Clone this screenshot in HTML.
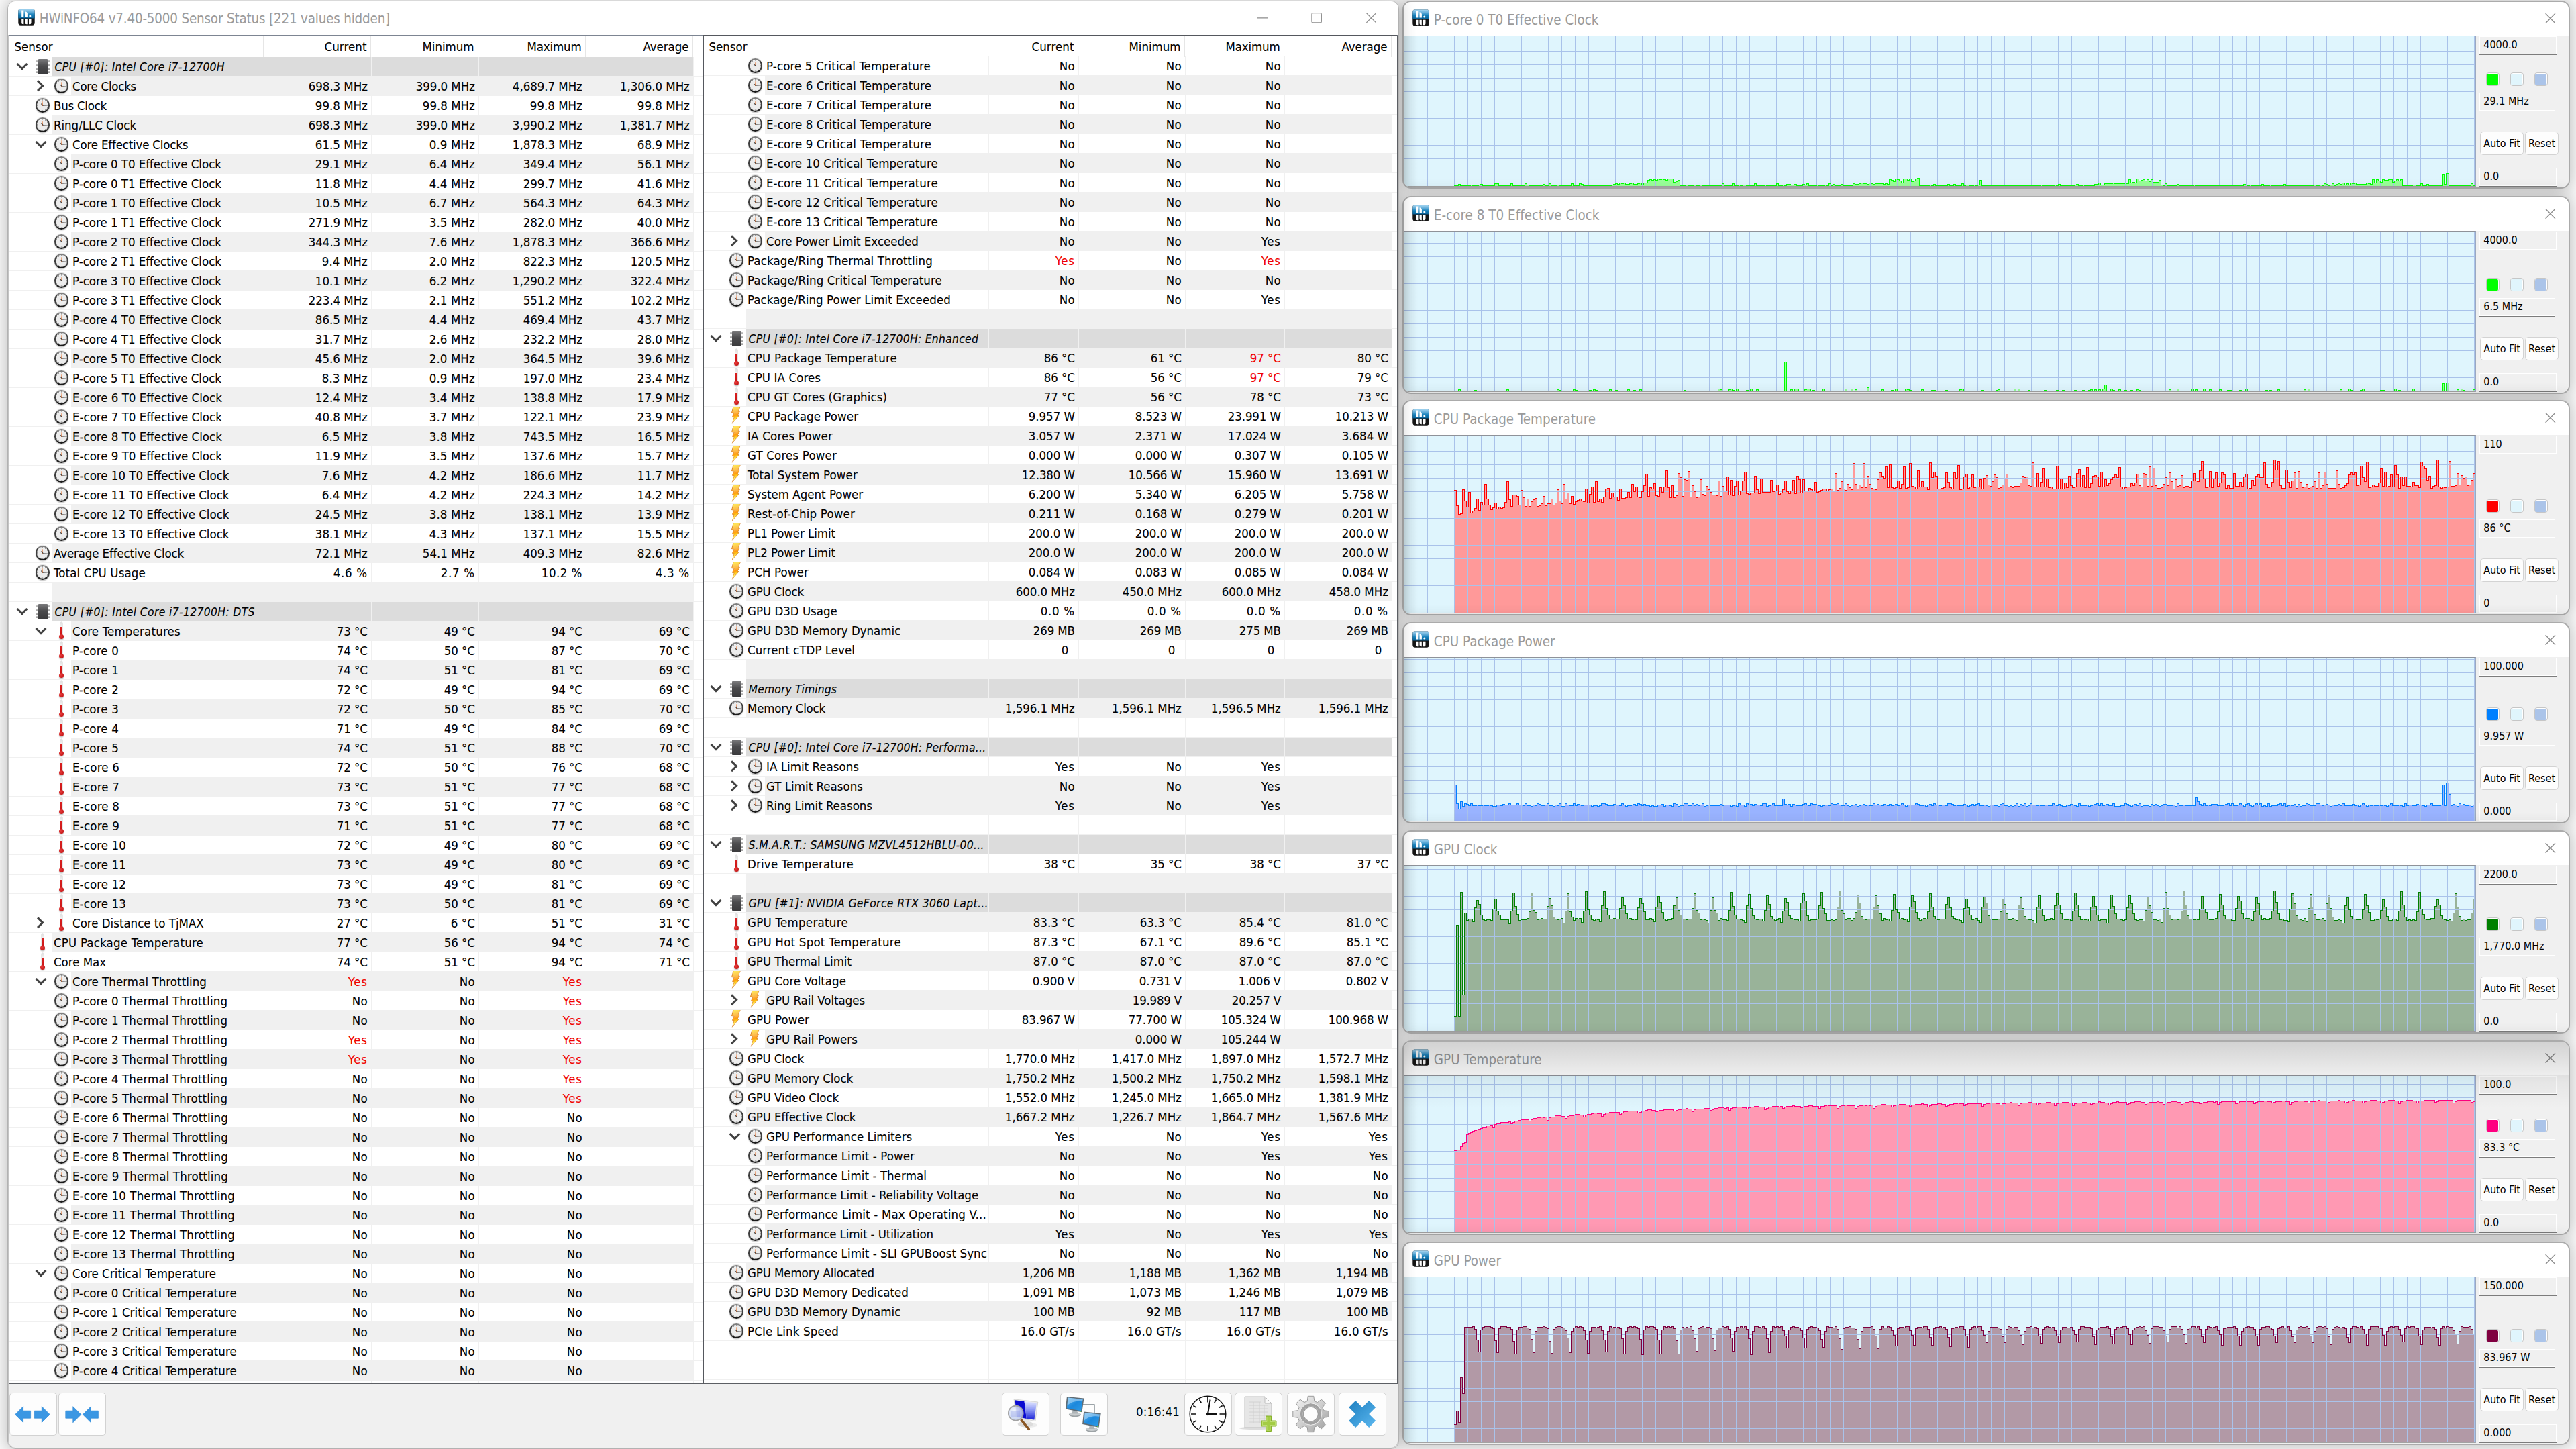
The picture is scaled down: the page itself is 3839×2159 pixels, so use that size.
<!DOCTYPE html><html><head><meta charset="utf-8"><title>HWiNFO64 Sensor Status</title><style>
*{box-sizing:border-box}
html,body{margin:0;padding:0}
body{width:3839px;height:2159px;overflow:hidden;background:#fafafa;position:relative;font-family:"Liberation Sans",sans-serif;color:#000}
.win{position:absolute;background:#fff;border:1px solid #a6a6a6;border-radius:12px;overflow:hidden;box-shadow:0 0 24px 2px rgba(0,0,0,.24)}
#mw{left:11px;top:1px;width:2074px;height:2158px;background:#f0f0f0;z-index:5;border-color:#b2b2b2;outline:1px solid #c4c4c4;outline-offset:-2px}
.tb{position:absolute;left:0;top:0;right:0;height:50px;background:#fff}
.tt{position:absolute;top:11px;line-height:30px;font-family:"DejaVu Sans Condensed","Liberation Sans",sans-serif;font-size:20.4px;letter-spacing:-.18px;color:#9a9a9a;white-space:pre}
.lg{position:absolute;width:25px;height:25px}
.cap{position:absolute;stroke:#8c8c8c;stroke-width:1.3;fill:none}
#pn{position:absolute;left:1px;top:50px;width:2070px;height:2010px;background:#fff;border:1px solid #7d8592;border-right-color:#5c5f64;border-bottom-color:#5c5f64}
.ls{position:absolute;top:0;height:2008px;overflow:hidden;font-family:"DejaVu Sans Condensed","Liberation Sans",sans-serif;font-size:18.5px;white-space:pre;-webkit-text-stroke:.12px}
#l1{left:0;width:1033px}
#l2{left:1035px;width:1033px;border-top:1px solid #55585e;margin-top:-1px;height:2009px}
#l2 .rows,#l2 .vg{top:31px}
#sp{position:absolute;left:1033px;top:-1px;width:2px;height:2010px;background:linear-gradient(to right,#a4a8ae 50%,#55585e 50%)}
.hd{position:absolute;left:0;top:0;height:32px;width:100%;line-height:33px}
.hd span{position:absolute;top:0}
.hd i{position:absolute;top:1px;width:1px;height:31px;background:#e6e6e6}
.vg{position:absolute;top:32px;bottom:0;width:1px;background:#f0f0f0}
.rows{position:absolute;left:0;top:32px;width:100%}
.r{height:29px;border-bottom:1px solid #f0f0f0;display:flex;position:relative;line-height:29px}
.r>div{height:28px;margin-right:1px;flex:none;overflow:hidden}
.c0{display:flex}
.c0 u{display:block;flex:none;position:relative;height:28px;text-decoration:none}
.c0 b{display:block;flex:1;font-weight:normal;padding-left:2px;overflow:hidden;height:28px}
.v{text-align:right;padding-right:5.2px}
.g .v,.g .c0 b{background:#f0f0f0}
.h .v,.h .c0 b{background:#dcdcdc}
.h .c0 b{font-style:italic;font-size:17.4px;padding-left:3.6px;line-height:30.6px}
.red{color:#f00000}
/* icons */
.clk{position:absolute;top:3.4px;width:21.4px;height:21.4px;border-radius:50%;border:2.2px solid;border-color:#7f7f7f #3d3d3d #1a1a1a #3d3d3d;background:linear-gradient(90deg,#777,#b5b5b5) no-repeat 9.4px 8.6px/7.2px 1.3px,radial-gradient(circle at 50% 50%,#ececec 0,#ececec 58%,rgba(236,236,236,0) 62%),repeating-conic-gradient(from -5deg,#9a9a9a 0deg,#9a9a9a 10deg,rgba(230,230,230,0) 10deg,rgba(230,230,230,0) 30deg),linear-gradient(#f6f6f6,#dadada);box-shadow:0 1.6px 1.4px rgba(0,0,0,.22),0 -1.2px 1px rgba(0,0,0,.10)}
.clk:before{content:"";position:absolute;left:8px;top:2.2px;width:1.3px;height:7.2px;background:linear-gradient(#f0c3a8,#d9773f)}
.clk:after{content:"";position:absolute;left:4.6px;top:8.2px;width:4.4px;height:1.4px;background:#3a3a3a;transform:rotate(40deg);transform-origin:100% 50%}
.thm{position:absolute;top:1px;width:8px;height:26px}
.thm:before{content:"";position:absolute;left:2.5px;top:.4px;width:3px;height:21px;border-radius:1.5px 1.5px 0 0;background:linear-gradient(#dcdcdc 0,#f2f2f2 33%,#d92020 35%,#c81414 100%);box-shadow:0 0 0 .5px #d0d0d0}
.thm:after{content:"";position:absolute;left:.5px;top:17.5px;width:7px;height:7px;border-radius:50%;background:radial-gradient(circle at 35% 35%,#e83a3a,#b80e0e);box-shadow:0 1.5px 1.5px rgba(0,0,0,.25)}
.blt{position:absolute;top:-1px;width:14px;height:27px;background:#d9822b;clip-path:polygon(19% 1%,100% 1%,75% 29%,92% 30%,69% 52%,85% 53%,5% 100%,26% 63%,6% 61%,26% 39%,0 37%)}
.blt:before{content:"";position:absolute;left:0;top:0;width:14px;height:27px;background:linear-gradient(165deg,#ffe85a 8%,#fdb54a 38%,#ff9a0e 50%,#ffc81a 60%,#fff08a 76%,#f7a11e 100%);clip-path:polygon(24% 4%,93% 4%,70% 31%,84% 32%,64% 54%,76% 55%,14% 92%,32% 61%,13% 59%,32% 37%,8% 35%)}
.chp{position:absolute;top:2.7px;width:14px;height:23.3px;background:linear-gradient(#7b7b7d,#4b4b4d 45%,#3a3a3c);border-radius:1px}
.chp:before,.chp:after{content:"";position:absolute;top:2.2px;width:3.2px;height:19px;background:repeating-linear-gradient(#c9c9c9 0,#9c9c9c 3.1px,transparent 3.1px,transparent 5.3px)}
.chp:before{left:-3.2px}.chp:after{right:-3.2px}
.ev,.er{position:absolute;border:solid #424242}
.ev{width:12px;height:12px;border-width:0 3.4px 3.4px 0;top:4.7px;transform:rotate(45deg)}
.er{width:11.5px;height:11.5px;border-width:0 3.3px 3.3px 0;top:8.25px;transform:rotate(-45deg)}
/* toolbar */
.bt{position:absolute;top:2074px;width:71px;height:64px;background:#fdfdfd;border:1px solid #d2d2d2;border-radius:5px}
.bt svg{position:absolute;left:0;top:0}
#tm{position:absolute;left:1681px;top:2086.7px;font-family:"DejaVu Sans Condensed","Liberation Sans",sans-serif;font-size:18.5px;letter-spacing:.1px;line-height:30px}
/* graph windows */
.gw{left:2090px;width:1740px;border:2px solid #ababab;background:#f0f0f0;border-radius:13px}
.ga{position:absolute;left:0;top:50px;width:1598px;background-color:#dff5fd;border-top:1px solid #8f9299;border-right:1px solid #9aa8c0;border-bottom:1px solid #a3a3a3;overflow:hidden}
.ga svg{position:absolute;left:0;top:0}
.sh{position:absolute;left:0;top:0;width:22px;height:100%;background:linear-gradient(to right,rgba(0,0,0,.10),rgba(0,0,0,.04) 45%,rgba(0,0,0,0))}
.sd{position:absolute;left:1598px;top:50px;right:0;background:#f0f0f0;font-family:"DejaVu Sans Condensed","Liberation Sans",sans-serif;font-size:16px;white-space:pre}
.fd{position:absolute;left:5px;height:27px;background:#f0f0f0;border:1px solid #fff;box-shadow:0 1px 0 #7c7c7c;line-height:24px;padding-left:5.3px}
.sw{position:absolute;width:20px;height:20px;border:1px solid #c6c6c6;border-radius:4px;background:#fff}
.gb{position:absolute;height:35px;background:#fdfdfd;border:1px solid #d3d3d3;border-radius:5px;line-height:33px;text-align:center}
</style></head><body><div class="win gw" style="top:1px;height:280px"><div class="tb"><svg class="lg" style="left:13.4px;top:11.3px" viewBox="0 0 25 25"><defs><linearGradient id="lg1" x1="0" y1="0" x2="0" y2="1"><stop offset="0" stop-color="#a9d8f2"/><stop offset=".3" stop-color="#6db3dc"/><stop offset=".62" stop-color="#1580bb"/><stop offset="1" stop-color="#0a5f93"/></linearGradient></defs><rect x=".3" y=".3" width="24.4" height="24.4" rx="3.6" fill="#151515"/><path d="M.3 14.6V3.9A3.6 3.6 0 0 1 3.9 .3H21.1A3.6 3.6 0 0 1 24.7 3.9V14.6Z" fill="url(#lg1)"/><path d="M5.2 2.5h3.1v10H5.2zM10.5 4.3l2.2.6 1.2 2.2v5.4h-3.4zM5.2 15.7h3.2v7.6H7.4a2.2 2.2 0 0 1-2.2-2.2zM10.5 15.7h3.3v7.6h-1.1a2.2 2.2 0 0 1-2.2-2.2zM16 15.7h3.5v5a2.6 2.6 0 0 1-2.6 2.6H16z" fill="#fff"/><circle cx="17.8" cy="11" r="1.55" fill="#fff"/></svg><span class="tt" style="left:44.8px;top:11.6px;letter-spacing:.03px">P-core 0 T0 Effective Clock</span><svg class="cap" style="left:1693.5px;top:10px" width="30" height="30"><path d="M7.6 7.3l14.4 14.4M22 7.3L7.6 21.7"/></svg></div><div class="ga" style="height:225px"><svg width="1597" height="223" shape-rendering="crispEdges"><path d="M75 222h6v-2h3v2h15v-1h3v1h9v-1h3v-1h3v2h18v-3h6v3h18v-3h3v3h18v-3h3v2h3v1h21v-2h3v2h6v-3h3v3h9v-1h3v1h18v-3h3v3h9v-3h3v1h3v2h42v-1h3v-1h3v-1h3v1h3v-2h3v1h3v-1h3v2h6v-1h3v-1h3v2h6v-1h3v-1h3v3h3v-3h6v-4h3v-1h3v1h3v-1h3v1h3v-2h3v1h3v-1h3v1h3v1h3v-2h9v5h3v-1h3v-2h3v8h9v-1h3v1h9v-1h3v1h6v-1h3v1h30v-3h3v3h12v-3h3v3h6v-1h3v1h3v-1h6v1h12v-3h3v3h12v-1h3v1h15v-3h3v3h6v-1h3v1h3v-2h6v1h6v-1h3v2h9v-2h3v1h3v-2h3v3h12v-1h3v1h9v-1h3v1h3v-3h3v3h3v-2h3v2h9v-2h3v2h15v-3h3v1h6v-1h3v-1h3v1h6v1h3v-2h3v1h3v1h3v-1h12v1h3v-1h3v1h3v-7h3v1h3v2h3v-4h3v1h3v2h3v3h3v-6h6v2h3v-2h3v4h3v-1h3v-3h3v-1h3v11h15v-1h3v1h3v-2h3v2h18v-2h3v2h6v-2h3v2h9v-3h3v3h3v-1h6v1h6v-1h3v1h3v-1h3v-7h3v8h87v-1h3v1h18v-1h3v1h3v-2h3v2h21v-1h3v-1h3v2h6v-1h3v1h15v-2h6v-2h3v3h6v-2h12v-1h3v1h15v-1h3v1h3v-6h3v5h3v-1h3v1h3v-6h3v3h3v-1h3v-1h3v2h3v-2h3v3h3v-3h3v4h9v-3h3v7h3v1h3v-3h3v3h15v-2h3v2h21v-1h3v1h72v-2h3v1h3v1h3v-1h3v1h15v-2h3v2h9v-1h3v1h18v-2h3v2h42v-1h3v1h6v-1h3v1h3v-3h3v1h3v2h3v-1h3v-2h3v3h3v-2h3v-1h3v1h3v-2h3v3h3v-2h3v2h3v-3h3v1h3v-1h3v2h15v-2h3v1h3v1h3v-7h3v5h3v-5h3v2h3v2h3v-4h3v1h6v-1h6v4h3v-2h3v-2h3v2h3v-2h3v9h15v-1h6v1h6v-3h3v3h6v-2h3v2h21v-16h3v14h3v-16h3v18h33v-3h3v3h3v-2h3V225H75Z" fill="#99ff99"/><path d="M15.5 0V223M35.5 0V223M55.5 0V223M75.5 0V223M95.5 0V223M115.5 0V223M135.5 0V223M155.5 0V223M175.5 0V223M195.5 0V223M215.5 0V223M235.5 0V223M255.5 0V223M275.5 0V223M295.5 0V223M315.5 0V223M335.5 0V223M355.5 0V223M375.5 0V223M395.5 0V223M415.5 0V223M435.5 0V223M455.5 0V223M475.5 0V223M495.5 0V223M515.5 0V223M535.5 0V223M555.5 0V223M575.5 0V223M595.5 0V223M615.5 0V223M635.5 0V223M655.5 0V223M675.5 0V223M695.5 0V223M715.5 0V223M735.5 0V223M755.5 0V223M775.5 0V223M795.5 0V223M815.5 0V223M835.5 0V223M855.5 0V223M875.5 0V223M895.5 0V223M915.5 0V223M935.5 0V223M955.5 0V223M975.5 0V223M995.5 0V223M1015.5 0V223M1035.5 0V223M1055.5 0V223M1075.5 0V223M1095.5 0V223M1115.5 0V223M1135.5 0V223M1155.5 0V223M1175.5 0V223M1195.5 0V223M1215.5 0V223M1235.5 0V223M1255.5 0V223M1275.5 0V223M1295.5 0V223M1315.5 0V223M1335.5 0V223M1355.5 0V223M1375.5 0V223M1395.5 0V223M1415.5 0V223M1435.5 0V223M1455.5 0V223M1475.5 0V223M1495.5 0V223M1515.5 0V223M1535.5 0V223M1555.5 0V223M1575.5 0V223M1595.5 0V223M0 202.5H1597M0 182.5H1597M0 162.5H1597M0 142.5H1597M0 122.5H1597M0 102.5H1597M0 82.5H1597M0 62.5H1597M0 42.5H1597M0 22.5H1597M0 2.5H1597" stroke="#a9c2ea" stroke-width="1" fill="none"/><path d="M75 222h6v-2h3v2h15v-1h3v1h9v-1h3v-1h3v2h18v-3h6v3h18v-3h3v3h18v-3h3v2h3v1h21v-2h3v2h6v-3h3v3h9v-1h3v1h18v-3h3v3h9v-3h3v1h3v2h42v-1h3v-1h3v-1h3v1h3v-2h3v1h3v-1h3v2h6v-1h3v-1h3v2h6v-1h3v-1h3v3h3v-3h6v-4h3v-1h3v1h3v-1h3v1h3v-2h3v1h3v-1h3v1h3v1h3v-2h9v5h3v-1h3v-2h3v8h9v-1h3v1h9v-1h3v1h6v-1h3v1h30v-3h3v3h12v-3h3v3h6v-1h3v1h3v-1h6v1h12v-3h3v3h12v-1h3v1h15v-3h3v3h6v-1h3v1h3v-2h6v1h6v-1h3v2h9v-2h3v1h3v-2h3v3h12v-1h3v1h9v-1h3v1h3v-3h3v3h3v-2h3v2h9v-2h3v2h15v-3h3v1h6v-1h3v-1h3v1h6v1h3v-2h3v1h3v1h3v-1h12v1h3v-1h3v1h3v-7h3v1h3v2h3v-4h3v1h3v2h3v3h3v-6h6v2h3v-2h3v4h3v-1h3v-3h3v-1h3v11h15v-1h3v1h3v-2h3v2h18v-2h3v2h6v-2h3v2h9v-3h3v3h3v-1h6v1h6v-1h3v1h3v-1h3v-7h3v8h87v-1h3v1h18v-1h3v1h3v-2h3v2h21v-1h3v-1h3v2h6v-1h3v1h15v-2h6v-2h3v3h6v-2h12v-1h3v1h15v-1h3v1h3v-6h3v5h3v-1h3v1h3v-6h3v3h3v-1h3v-1h3v2h3v-2h3v3h3v-3h3v4h9v-3h3v7h3v1h3v-3h3v3h15v-2h3v2h21v-1h3v1h72v-2h3v1h3v1h3v-1h3v1h15v-2h3v2h9v-1h3v1h18v-2h3v2h42v-1h3v1h6v-1h3v1h3v-3h3v1h3v2h3v-1h3v-2h3v3h3v-2h3v-1h3v1h3v-2h3v3h3v-2h3v2h3v-3h3v1h3v-1h3v2h15v-2h3v1h3v1h3v-7h3v5h3v-5h3v2h3v2h3v-4h3v1h6v-1h6v4h3v-2h3v-2h3v2h3v-2h3v9h15v-1h6v1h6v-3h3v3h6v-2h3v2h21v-16h3v14h3v-16h3v18h33v-3h3v3h3v-2h3" stroke="#00ff00" stroke-width="1" fill="none"/></svg><div class="sh"></div></div><div class="sd" style="height:226px"><div class="fd" style="top:1px;width:115px">4000.0</div><div class="sw" style="left:14.6px;top:55.30000000000001px"><i style="position:absolute;left:.5px;top:.5px;right:.5px;bottom:.5px;border-radius:2px;background:#00ff00"></i></div><div class="sw" style="left:50.6px;top:55.30000000000001px"><i style="position:absolute;left:.5px;top:.5px;right:.5px;bottom:.5px;border-radius:2px;background:#e0f5fc"></i></div><div class="sw" style="left:86.6px;top:55.30000000000001px"><i style="position:absolute;left:.5px;top:.5px;right:.5px;bottom:.5px;border-radius:2px;background:#abc4e9"></i></div><div class="fd" style="top:85px;width:113px">29.1 MHz</div><div class="gb" style="left:6px;top:143px;width:65px">Auto Fit</div><div class="gb" style="left:73px;top:143px;width:50px">Reset</div><div class="fd" style="top:197px;width:115px">0.0</div></div></div><div class="win gw" style="top:292px;height:295px"><div class="tb"><svg class="lg" style="left:13.4px;top:11.3px" viewBox="0 0 25 25"><defs><linearGradient id="lg2" x1="0" y1="0" x2="0" y2="1"><stop offset="0" stop-color="#a9d8f2"/><stop offset=".3" stop-color="#6db3dc"/><stop offset=".62" stop-color="#1580bb"/><stop offset="1" stop-color="#0a5f93"/></linearGradient></defs><rect x=".3" y=".3" width="24.4" height="24.4" rx="3.6" fill="#151515"/><path d="M.3 14.6V3.9A3.6 3.6 0 0 1 3.9 .3H21.1A3.6 3.6 0 0 1 24.7 3.9V14.6Z" fill="url(#lg2)"/><path d="M5.2 2.5h3.1v10H5.2zM10.5 4.3l2.2.6 1.2 2.2v5.4h-3.4zM5.2 15.7h3.2v7.6H7.4a2.2 2.2 0 0 1-2.2-2.2zM10.5 15.7h3.3v7.6h-1.1a2.2 2.2 0 0 1-2.2-2.2zM16 15.7h3.5v5a2.6 2.6 0 0 1-2.6 2.6H16z" fill="#fff"/><circle cx="17.8" cy="11" r="1.55" fill="#fff"/></svg><span class="tt" style="left:44.8px;top:11.6px;letter-spacing:.03px">E-core 8 T0 Effective Clock</span><svg class="cap" style="left:1693.5px;top:10px" width="30" height="30"><path d="M7.6 7.3l14.4 14.4M22 7.3L7.6 21.7"/></svg></div><div class="ga" style="height:240px"><svg width="1597" height="238" shape-rendering="crispEdges"><path d="M75 237h6v-2h3v2h21v-1h3v1h45v-2h3v2h72v-2h3v1h3v1h18v-2h3v1h3v1h18v-1h3v1h3v-2h3v1h3v1h18v-2h3v2h6v-1h3v1h15v-2h3v2h6v-1h3v1h6v-2h3v2h63v-1h3v1h48v-3h3v1h3v2h9v-2h3v-1h3v2h3v1h3v-3h3v3h12v-1h3v1h3v-3h3v3h6v-2h3v2h39v-43h3v43h6v-2h3v2h3v-3h6v3h9v-2h3v-1h6v3h3v-1h3v1h12v-3h3v3h30v-3h3v3h6v-3h3v3h3v-2h3v2h15v-5h3v5h18v-2h3v2h12v-1h3v1h3v-3h3v3h12v-3h3v1h3v1h3v1h15v-2h3v2h12v-1h6v1h15v-1h3v1h18v-2h3v-1h3v3h27v-1h3v1h18v-1h3v-1h3v2h21v-3h3v3h3v-3h3v3h12v-1h3v1h21v-1h3v1h15v-1h3v1h6v-1h3v1h15v-1h3v1h9v-1h3v1h6v-1h3v-1h3v2h3v-2h3v2h3v-2h3v2h3v-3h3v-6h3v9h6v-3h3v2h3v1h6v-2h3v2h6v-1h3v1h6v-1h3v1h6v-2h3v1h3v1h42v-2h3v2h9v-3h3v3h18v-3h3v3h3v-2h3v2h9v-3h3v3h6v-2h3v2h12v-2h3v2h9v-1h6v1h12v-1h3v1h6v-3h3v3h27v-1h3v1h3v-1h3v1h9v-2h3v2h36v-2h3v2h3v-3h3v3h45v-2h3v2h9v-3h3v2h3v1h12v-1h3v-2h3v3h24v-1h6v1h15v-3h3v3h3v-1h3v1h18v-3h3v3h42v-11h3v11h3v-12h3v12h12v-2h3v2h3v-3h3v2h3v1h12v-2h3v2h3V240H75Z" fill="#99ff99"/><path d="M15.5 0V238M35.5 0V238M55.5 0V238M75.5 0V238M95.5 0V238M115.5 0V238M135.5 0V238M155.5 0V238M175.5 0V238M195.5 0V238M215.5 0V238M235.5 0V238M255.5 0V238M275.5 0V238M295.5 0V238M315.5 0V238M335.5 0V238M355.5 0V238M375.5 0V238M395.5 0V238M415.5 0V238M435.5 0V238M455.5 0V238M475.5 0V238M495.5 0V238M515.5 0V238M535.5 0V238M555.5 0V238M575.5 0V238M595.5 0V238M615.5 0V238M635.5 0V238M655.5 0V238M675.5 0V238M695.5 0V238M715.5 0V238M735.5 0V238M755.5 0V238M775.5 0V238M795.5 0V238M815.5 0V238M835.5 0V238M855.5 0V238M875.5 0V238M895.5 0V238M915.5 0V238M935.5 0V238M955.5 0V238M975.5 0V238M995.5 0V238M1015.5 0V238M1035.5 0V238M1055.5 0V238M1075.5 0V238M1095.5 0V238M1115.5 0V238M1135.5 0V238M1155.5 0V238M1175.5 0V238M1195.5 0V238M1215.5 0V238M1235.5 0V238M1255.5 0V238M1275.5 0V238M1295.5 0V238M1315.5 0V238M1335.5 0V238M1355.5 0V238M1375.5 0V238M1395.5 0V238M1415.5 0V238M1435.5 0V238M1455.5 0V238M1475.5 0V238M1495.5 0V238M1515.5 0V238M1535.5 0V238M1555.5 0V238M1575.5 0V238M1595.5 0V238M0 217.5H1597M0 197.5H1597M0 177.5H1597M0 157.5H1597M0 137.5H1597M0 117.5H1597M0 97.5H1597M0 77.5H1597M0 57.5H1597M0 37.5H1597M0 17.5H1597" stroke="#a9c2ea" stroke-width="1" fill="none"/><path d="M75 237h6v-2h3v2h21v-1h3v1h45v-2h3v2h72v-2h3v1h3v1h18v-2h3v1h3v1h18v-1h3v1h3v-2h3v1h3v1h18v-2h3v2h6v-1h3v1h15v-2h3v2h6v-1h3v1h6v-2h3v2h63v-1h3v1h48v-3h3v1h3v2h9v-2h3v-1h3v2h3v1h3v-3h3v3h12v-1h3v1h3v-3h3v3h6v-2h3v2h39v-43h3v43h6v-2h3v2h3v-3h6v3h9v-2h3v-1h6v3h3v-1h3v1h12v-3h3v3h30v-3h3v3h6v-3h3v3h3v-2h3v2h15v-5h3v5h18v-2h3v2h12v-1h3v1h3v-3h3v3h12v-3h3v1h3v1h3v1h15v-2h3v2h12v-1h6v1h15v-1h3v1h18v-2h3v-1h3v3h27v-1h3v1h18v-1h3v-1h3v2h21v-3h3v3h3v-3h3v3h12v-1h3v1h21v-1h3v1h15v-1h3v1h6v-1h3v1h15v-1h3v1h9v-1h3v1h6v-1h3v-1h3v2h3v-2h3v2h3v-2h3v2h3v-3h3v-6h3v9h6v-3h3v2h3v1h6v-2h3v2h6v-1h3v1h6v-1h3v1h6v-2h3v1h3v1h42v-2h3v2h9v-3h3v3h18v-3h3v3h3v-2h3v2h9v-3h3v3h6v-2h3v2h12v-2h3v2h9v-1h6v1h12v-1h3v1h6v-3h3v3h27v-1h3v1h3v-1h3v1h9v-2h3v2h36v-2h3v2h3v-3h3v3h45v-2h3v2h9v-3h3v2h3v1h12v-1h3v-2h3v3h24v-1h6v1h15v-3h3v3h3v-1h3v1h18v-3h3v3h42v-11h3v11h3v-12h3v12h12v-2h3v2h3v-3h3v2h3v1h12v-2h3v2h3" stroke="#00ff00" stroke-width="1" fill="none"/></svg><div class="sh"></div></div><div class="sd" style="height:241px"><div class="fd" style="top:1px;width:115px">4000.0</div><div class="sw" style="left:14.6px;top:70.30000000000001px"><i style="position:absolute;left:.5px;top:.5px;right:.5px;bottom:.5px;border-radius:2px;background:#00ff00"></i></div><div class="sw" style="left:50.6px;top:70.30000000000001px"><i style="position:absolute;left:.5px;top:.5px;right:.5px;bottom:.5px;border-radius:2px;background:#e0f5fc"></i></div><div class="sw" style="left:86.6px;top:70.30000000000001px"><i style="position:absolute;left:.5px;top:.5px;right:.5px;bottom:.5px;border-radius:2px;background:#abc4e9"></i></div><div class="fd" style="top:100px;width:113px">6.5 MHz</div><div class="gb" style="left:6px;top:158px;width:65px">Auto Fit</div><div class="gb" style="left:73px;top:158px;width:50px">Reset</div><div class="fd" style="top:212px;width:115px">0.0</div></div></div><div class="win gw" style="top:596px;height:321px"><div class="tb"><svg class="lg" style="left:13.4px;top:11.3px" viewBox="0 0 25 25"><defs><linearGradient id="lg3" x1="0" y1="0" x2="0" y2="1"><stop offset="0" stop-color="#a9d8f2"/><stop offset=".3" stop-color="#6db3dc"/><stop offset=".62" stop-color="#1580bb"/><stop offset="1" stop-color="#0a5f93"/></linearGradient></defs><rect x=".3" y=".3" width="24.4" height="24.4" rx="3.6" fill="#151515"/><path d="M.3 14.6V3.9A3.6 3.6 0 0 1 3.9 .3H21.1A3.6 3.6 0 0 1 24.7 3.9V14.6Z" fill="url(#lg3)"/><path d="M5.2 2.5h3.1v10H5.2zM10.5 4.3l2.2.6 1.2 2.2v5.4h-3.4zM5.2 15.7h3.2v7.6H7.4a2.2 2.2 0 0 1-2.2-2.2zM10.5 15.7h3.3v7.6h-1.1a2.2 2.2 0 0 1-2.2-2.2zM16 15.7h3.5v5a2.6 2.6 0 0 1-2.6 2.6H16z" fill="#fff"/><circle cx="17.8" cy="11" r="1.55" fill="#fff"/></svg><span class="tt" style="left:44.8px;top:11.6px;letter-spacing:.03px">CPU Package Temperature</span><svg class="cap" style="left:1693.5px;top:10px" width="30" height="30"><path d="M7.6 7.3l14.4 14.4M22 7.3L7.6 21.7"/></svg></div><div class="ga" style="height:266px"><svg width="1597" height="264" shape-rendering="crispEdges"><path d="M75 81h3v23h3v13h3v-1h3v-36h3v17h3v9h3v-22h3v31h3v-3h3v-4h3v-14h3v17h3v-12h3v4h3v-31h3v22h3v9h3v7h3v-3h3v-7h3v9h3v-3h3v2h3v-1h3v-8h3v-31h3v27h3v10h3v-17h6v2h3v13h3v-22h3v11h3v13h3v-11h3v11h3v-7h3v-3h3v-2h3v12h3v-1h3v-3h3v-11h3v14h3v-3h6v-7h3v9h3v-3h3v-20h3v17h3v4h3v-29h3v22h3v-9h3v16h3v-11h3v12h3v-4h3v-2h3v-2h3v3h3v1h3v-19h3v21h3v-13h3v-11h3v23h3v-31h3v30h3v-4h3v5h3v-8h3v-12h3v-1h3v15h3v-8h3v6h6v5h3v-17h3v14h6v-1h3v-8h3v8h3v-20h3v11h3v-7h3v15h3v1h3v-9h3v-9h3v-17h3v33h3v-13h3v2h3v-8h3v18h3v1h3v-13h3v7h3v-8h3v-24h3v25h3v15h3v-18h3v18h3v-3h3v-33h3v6h3v28h3v-25h3v1h3v-13h3v38h3v-17h3v9h3v9h3v-1h3v-26h3v22h3v2h3v-14h3v5h3v4h3v4h6v1h3v-22h3v23h3v-15h3v7h3v-21h3v27h3v-22h3v23h3v-14h3v-8h3v21h3v-6h3v-15h3v-13h3v32h3v1h3v-2h6v-25h3v20h3v6h3v-22h3v20h12v-18h3v17h3v-1h3v-9h3v14h3v-2h3v-5h3v-13h3v16h3v3h3v-4h3v-16h3v20h3v-26h3v5h3v20h3v-20h3v17h6v-4h3v2h3v2h3v-13h3v15h3v-1h3v-2h3v-2h6v3h3v-2h3v-1h3v3h3v-26h3v25h3v-3h3v-10h3v11h3v2h3v-9h3v5h3v3h3v-39h3v31h3v7h3v-6h3v4h3v-36h3v36h3v-17h3v12h3v6h3v1h3v1h3v-15h3v-10h3v5h3v3h3v-17h3v31h3v-34h3v34h3v1h3v-1h3v-10h3v11h3v-6h3v-26h3v32h3v-1h3v-36h3v34h3v1h3v3h3v-27h3v24h3v-8h3v8h6v4h3v-40h3v22h3v-8h3v6h3v19h6v-1h3v-1h3v-22h3v14h3v8h3v2h3v-24h3v8h3v-19h3v36h3v-1h3v-18h3v-4h3v21h3v-2h3v-18h3v19h3v-1h6v-11h3v14h3v-16h3v-4h3v14h3v2h3v-7h3v-10h3v4h3v16h3v-1h3v-4h3v-9h3v-7h3v19h3v-1h3v2h3v-2h9v-5h3v-10h3v2h3v-1h3v13h3v1h3v-35h3v36h3v-20h3v20h3v-7h3v-20h3v27h3v-12h3v13h3v-1h3v3h6v-34h3v34h3v-15h3v15h3v-9h3v7h3v-17h3v14h3v3h3v-1h3v-20h3v-6h3v26h3v-17h3v18h3v-30h3v30h3v-6h3v-11h3v-1h3v2h3v14h3v-21h3v22h3v-11h3v9h3v-3h3v-6h3v-3h3v-4h3v4h3v-15h3v29h3v3h3v-2h3v-1h6v-5h3v3h3v-4h3v-13h3v17h3v2h3v-20h3v2h3v17h3v-29h3v29h3v-27h3v26h3v4h6v-1h3v-5h3v-10h3v12h3v-19h3v13h3v11h3v-14h3v10h3v-1h3v-15h3v18h3v-2h6v2h3v-10h3v-11h3v11h3v1h3v-16h3v-14h3v26h3v13h3v-1h3v-23h3v24h3v-13h3v-9h3v20h3v-5h3v-15h3v3h3v20h3v-4h3v4h6v-22h3v19h6v-6h3v6h3v-14h3v-4h3v22h3v-1h3v-12h3v8h3v-14h3v-2h3v4h6v-22h3v32h3v5h3v-1h3v-7h3v-33h3v15h3v-13h3v36h3v4h6v-27h3v18h3v8h3v-10h3v-12h3v23h3v-25h3v16h3v8h3v-1h3v-4h3v6h3v-2h3v-1h3v-7h3v10h3v-23h3v23h3v-4h3v-20h3v18h3v6h12v-26h3v20h3v6h3v-1h3v-3h3v-3h3v-13h3v-3h3v3h3v-3h3v19h3v-1h3v-28h3v17h3v6h3v-29h3v38h3v-1h3v-3h3v2h6v-5h3v-21h3v26h3v-21h3v22h3v-1h3v-17h3v18h3v-32h3v14h3v20h3v-17h3v13h3v-13h3v14h6v1h3v-7h3v5h6v3h3v-38h3v6h3v4h3v17h3v-6h3v18h3v-3h3v-1h3v-38h3v40h3v2h3v-2h3v1h3v-1h3v-38h3v37h6v-1h3v-18h3v17h3v-14h3v4h3v-2h3v13h3v-1h3v-7h3v-10h3v-10h3V266H75Z" fill="#ff9999"/><path d="M15.5 0V264M35.5 0V264M55.5 0V264M75.5 0V264M95.5 0V264M115.5 0V264M135.5 0V264M155.5 0V264M175.5 0V264M195.5 0V264M215.5 0V264M235.5 0V264M255.5 0V264M275.5 0V264M295.5 0V264M315.5 0V264M335.5 0V264M355.5 0V264M375.5 0V264M395.5 0V264M415.5 0V264M435.5 0V264M455.5 0V264M475.5 0V264M495.5 0V264M515.5 0V264M535.5 0V264M555.5 0V264M575.5 0V264M595.5 0V264M615.5 0V264M635.5 0V264M655.5 0V264M675.5 0V264M695.5 0V264M715.5 0V264M735.5 0V264M755.5 0V264M775.5 0V264M795.5 0V264M815.5 0V264M835.5 0V264M855.5 0V264M875.5 0V264M895.5 0V264M915.5 0V264M935.5 0V264M955.5 0V264M975.5 0V264M995.5 0V264M1015.5 0V264M1035.5 0V264M1055.5 0V264M1075.5 0V264M1095.5 0V264M1115.5 0V264M1135.5 0V264M1155.5 0V264M1175.5 0V264M1195.5 0V264M1215.5 0V264M1235.5 0V264M1255.5 0V264M1275.5 0V264M1295.5 0V264M1315.5 0V264M1335.5 0V264M1355.5 0V264M1375.5 0V264M1395.5 0V264M1415.5 0V264M1435.5 0V264M1455.5 0V264M1475.5 0V264M1495.5 0V264M1515.5 0V264M1535.5 0V264M1555.5 0V264M1575.5 0V264M1595.5 0V264M0 243.5H1597M0 223.5H1597M0 203.5H1597M0 183.5H1597M0 163.5H1597M0 143.5H1597M0 123.5H1597M0 103.5H1597M0 83.5H1597M0 63.5H1597M0 43.5H1597M0 23.5H1597M0 3.5H1597" stroke="#a9c2ea" stroke-width="1" fill="none"/><path d="M75 81h3v23h3v13h3v-1h3v-36h3v17h3v9h3v-22h3v31h3v-3h3v-4h3v-14h3v17h3v-12h3v4h3v-31h3v22h3v9h3v7h3v-3h3v-7h3v9h3v-3h3v2h3v-1h3v-8h3v-31h3v27h3v10h3v-17h6v2h3v13h3v-22h3v11h3v13h3v-11h3v11h3v-7h3v-3h3v-2h3v12h3v-1h3v-3h3v-11h3v14h3v-3h6v-7h3v9h3v-3h3v-20h3v17h3v4h3v-29h3v22h3v-9h3v16h3v-11h3v12h3v-4h3v-2h3v-2h3v3h3v1h3v-19h3v21h3v-13h3v-11h3v23h3v-31h3v30h3v-4h3v5h3v-8h3v-12h3v-1h3v15h3v-8h3v6h6v5h3v-17h3v14h6v-1h3v-8h3v8h3v-20h3v11h3v-7h3v15h3v1h3v-9h3v-9h3v-17h3v33h3v-13h3v2h3v-8h3v18h3v1h3v-13h3v7h3v-8h3v-24h3v25h3v15h3v-18h3v18h3v-3h3v-33h3v6h3v28h3v-25h3v1h3v-13h3v38h3v-17h3v9h3v9h3v-1h3v-26h3v22h3v2h3v-14h3v5h3v4h3v4h6v1h3v-22h3v23h3v-15h3v7h3v-21h3v27h3v-22h3v23h3v-14h3v-8h3v21h3v-6h3v-15h3v-13h3v32h3v1h3v-2h6v-25h3v20h3v6h3v-22h3v20h12v-18h3v17h3v-1h3v-9h3v14h3v-2h3v-5h3v-13h3v16h3v3h3v-4h3v-16h3v20h3v-26h3v5h3v20h3v-20h3v17h6v-4h3v2h3v2h3v-13h3v15h3v-1h3v-2h3v-2h6v3h3v-2h3v-1h3v3h3v-26h3v25h3v-3h3v-10h3v11h3v2h3v-9h3v5h3v3h3v-39h3v31h3v7h3v-6h3v4h3v-36h3v36h3v-17h3v12h3v6h3v1h3v1h3v-15h3v-10h3v5h3v3h3v-17h3v31h3v-34h3v34h3v1h3v-1h3v-10h3v11h3v-6h3v-26h3v32h3v-1h3v-36h3v34h3v1h3v3h3v-27h3v24h3v-8h3v8h6v4h3v-40h3v22h3v-8h3v6h3v19h6v-1h3v-1h3v-22h3v14h3v8h3v2h3v-24h3v8h3v-19h3v36h3v-1h3v-18h3v-4h3v21h3v-2h3v-18h3v19h3v-1h6v-11h3v14h3v-16h3v-4h3v14h3v2h3v-7h3v-10h3v4h3v16h3v-1h3v-4h3v-9h3v-7h3v19h3v-1h3v2h3v-2h9v-5h3v-10h3v2h3v-1h3v13h3v1h3v-35h3v36h3v-20h3v20h3v-7h3v-20h3v27h3v-12h3v13h3v-1h3v3h6v-34h3v34h3v-15h3v15h3v-9h3v7h3v-17h3v14h3v3h3v-1h3v-20h3v-6h3v26h3v-17h3v18h3v-30h3v30h3v-6h3v-11h3v-1h3v2h3v14h3v-21h3v22h3v-11h3v9h3v-3h3v-6h3v-3h3v-4h3v4h3v-15h3v29h3v3h3v-2h3v-1h6v-5h3v3h3v-4h3v-13h3v17h3v2h3v-20h3v2h3v17h3v-29h3v29h3v-27h3v26h3v4h6v-1h3v-5h3v-10h3v12h3v-19h3v13h3v11h3v-14h3v10h3v-1h3v-15h3v18h3v-2h6v2h3v-10h3v-11h3v11h3v1h3v-16h3v-14h3v26h3v13h3v-1h3v-23h3v24h3v-13h3v-9h3v20h3v-5h3v-15h3v3h3v20h3v-4h3v4h6v-22h3v19h6v-6h3v6h3v-14h3v-4h3v22h3v-1h3v-12h3v8h3v-14h3v-2h3v4h6v-22h3v32h3v5h3v-1h3v-7h3v-33h3v15h3v-13h3v36h3v4h6v-27h3v18h3v8h3v-10h3v-12h3v23h3v-25h3v16h3v8h3v-1h3v-4h3v6h3v-2h3v-1h3v-7h3v10h3v-23h3v23h3v-4h3v-20h3v18h3v6h12v-26h3v20h3v6h3v-1h3v-3h3v-3h3v-13h3v-3h3v3h3v-3h3v19h3v-1h3v-28h3v17h3v6h3v-29h3v38h3v-1h3v-3h3v2h6v-5h3v-21h3v26h3v-21h3v22h3v-1h3v-17h3v18h3v-32h3v14h3v20h3v-17h3v13h3v-13h3v14h6v1h3v-7h3v5h6v3h3v-38h3v6h3v4h3v17h3v-6h3v18h3v-3h3v-1h3v-38h3v40h3v2h3v-2h3v1h3v-1h3v-38h3v37h6v-1h3v-18h3v17h3v-14h3v4h3v-2h3v13h3v-1h3v-7h3v-10h3v-10h3" stroke="#ff0000" stroke-width="1" fill="none"/></svg><div class="sh"></div></div><div class="sd" style="height:267px"><div class="fd" style="top:1px;width:115px">110</div><div class="sw" style="left:14.6px;top:96.30000000000001px"><i style="position:absolute;left:.5px;top:.5px;right:.5px;bottom:.5px;border-radius:2px;background:#ff0000"></i></div><div class="sw" style="left:50.6px;top:96.30000000000001px"><i style="position:absolute;left:.5px;top:.5px;right:.5px;bottom:.5px;border-radius:2px;background:#e0f5fc"></i></div><div class="sw" style="left:86.6px;top:96.30000000000001px"><i style="position:absolute;left:.5px;top:.5px;right:.5px;bottom:.5px;border-radius:2px;background:#abc4e9"></i></div><div class="fd" style="top:126px;width:113px">86 °C</div><div class="gb" style="left:6px;top:184px;width:65px">Auto Fit</div><div class="gb" style="left:73px;top:184px;width:50px">Reset</div><div class="fd" style="top:238px;width:115px">0</div></div></div><div class="win gw" style="top:927px;height:300px"><div class="tb"><svg class="lg" style="left:13.4px;top:11.3px" viewBox="0 0 25 25"><defs><linearGradient id="lg4" x1="0" y1="0" x2="0" y2="1"><stop offset="0" stop-color="#a9d8f2"/><stop offset=".3" stop-color="#6db3dc"/><stop offset=".62" stop-color="#1580bb"/><stop offset="1" stop-color="#0a5f93"/></linearGradient></defs><rect x=".3" y=".3" width="24.4" height="24.4" rx="3.6" fill="#151515"/><path d="M.3 14.6V3.9A3.6 3.6 0 0 1 3.9 .3H21.1A3.6 3.6 0 0 1 24.7 3.9V14.6Z" fill="url(#lg4)"/><path d="M5.2 2.5h3.1v10H5.2zM10.5 4.3l2.2.6 1.2 2.2v5.4h-3.4zM5.2 15.7h3.2v7.6H7.4a2.2 2.2 0 0 1-2.2-2.2zM10.5 15.7h3.3v7.6h-1.1a2.2 2.2 0 0 1-2.2-2.2zM16 15.7h3.5v5a2.6 2.6 0 0 1-2.6 2.6H16z" fill="#fff"/><circle cx="17.8" cy="11" r="1.55" fill="#fff"/></svg><span class="tt" style="left:44.8px;top:11.6px;letter-spacing:.03px">CPU Package Power</span><svg class="cap" style="left:1693.5px;top:10px" width="30" height="30"><path d="M7.6 7.3l14.4 14.4M22 7.3L7.6 21.7"/></svg></div><div class="ga" style="height:245px"><svg width="1597" height="243" shape-rendering="crispEdges"><path d="M75 189h3v28h3v8h3v-11h3v7h3v-4h3v1h3v2h3v-3h3v3h6v-1h3v1h6v-1h3v1h6v-1h3v1h3v1h6v-2h6v1h3v-2h3v1h6v-2h3v2h9v-2h3v2h6v1h3v-3h3v3h6v1h3v-2h3v1h3v-3h3v1h3v2h6v-1h3v-2h3v3h6v1h3v-2h3v1h3v-3h3v4h6v-4h3v2h3v1h6v-3h3v3h3v-2h3v1h3v1h3v-1h12v2h3v-1h6v1h3v-1h3v-3h6v1h3v2h9v-2h3v1h6v1h3v-3h3v2h3v2h3v-1h6v-1h3v-1h3v2h3v-3h3v1h3v2h3v-2h3v2h6v1h3v-1h3v1h6v-2h6v-1h3v3h3v-2h6v1h3v1h3v-4h3v1h3v3h3v-1h6v-3h6v3h6v-3h3v3h3v-2h3v2h3v-1h3v-2h3v4h3v-1h3v-1h3v1h15v-2h3v2h3v-1h9v2h3v-1h3v-1h3v2h3v-4h3v2h6v2h3v-4h3v2h3v-1h3v2h3v-2h3v1h6v1h3v-3h6v4h3v-1h3v-1h3v-2h3v3h12v-10h3v8h3v1h3v-1h3v3h3v-3h3v1h3v1h9v-2h3v-1h3v2h3v1h3v-3h3v1h6v1h3v1h3v1h3v-1h3v-1h6v1h3v-3h3v1h6v-1h3v2h3v1h6v-3h3v3h3v1h3v-1h3v-1h3v-1h3v3h3v-1h3v-1h3v-1h3v2h3v-1h3v1h6v-3h3v2h3v-1h3v1h3v1h3v-2h3v1h3v1h3v-2h3v2h3v-1h3v-1h3v2h3v-1h3v-2h3v2h3v2h3v-2h12v-2h3v1h3v2h6v-1h3v2h3v-2h3v-1h3v2h3v-3h3v2h6v1h3v-1h6v1h3v-3h6v1h3v2h3v-1h3v1h9v-2h3v1h3v2h3v-1h3v-2h3v2h3v-2h3v-1h3v3h6v-1h3v1h3v1h3v-2h6v1h6v1h3v-3h3v-1h3v3h6v1h3v-1h3v1h3v-1h3v-3h3v4h3v-3h3v2h3v-3h3v4h3v-1h3v-3h3v2h6v1h3v-1h3v1h6v-1h6v1h6v-3h3v2h3v1h3v-2h3v2h3v1h6v-2h3v1h3v-2h3v1h3v1h3v1h3v-4h3v3h9v-1h3v2h3v-1h3v-1h3v-1h3v-1h3v3h3v-3h3v3h3v-1h3v-1h3v2h6v-3h3v4h9v-1h6v-3h3v1h3v2h3v1h3v-2h3v-1h3v2h3v-3h3v4h3v-1h9v1h3v-3h3v2h3v-2h3v2h3v1h3v-1h3v-2h6v2h9v-1h3v2h3v-4h3v3h6v-1h3v1h15v-12h3v6h3v4h3v2h3v-3h3v3h3v-1h3v1h3v-2h9v2h9v-1h3v-1h3v-1h3v3h3v-3h3v3h6v-1h3v-2h3v2h3v2h3v-3h3v-1h3v3h3v1h3v-2h3v-2h3v2h3v-2h3v4h3v-1h3v1h3v-4h3v4h3v-1h9v-2h3v-1h3v3h3v-3h3v4h3v-1h3v-1h3v1h3v-2h3v3h3v-3h3v3h3v-1h6v-3h3v1h3v2h9v-3h6v2h3v1h3v-1h3v-1h3v1h3v2h3v-2h3v1h6v-2h3v2h3v-3h3v3h12v-2h3v2h3v-1h3v2h3v-2h3v-2h3v2h3v2h3v-2h3v1h3v-1h3v1h6v-1h3v1h3v-1h3v1h3v1h3v-2h3v-2h3v3h9v-1h3v1h3v1h3v-4h3v3h3v-1h6v1h6v-2h3v1h6v1h3v1h3v-2h6v-2h3v3h12v-1h3v-30h3v31h3v-34h3v17h3v17h3v-2h3v1h3v2h3v-4h3v2h3v-1h3v2h6v-1h3v2h3v-2h3v-1h3V245H75Z" fill="#99b3ff"/><path d="M15.5 0V243M35.5 0V243M55.5 0V243M75.5 0V243M95.5 0V243M115.5 0V243M135.5 0V243M155.5 0V243M175.5 0V243M195.5 0V243M215.5 0V243M235.5 0V243M255.5 0V243M275.5 0V243M295.5 0V243M315.5 0V243M335.5 0V243M355.5 0V243M375.5 0V243M395.5 0V243M415.5 0V243M435.5 0V243M455.5 0V243M475.5 0V243M495.5 0V243M515.5 0V243M535.5 0V243M555.5 0V243M575.5 0V243M595.5 0V243M615.5 0V243M635.5 0V243M655.5 0V243M675.5 0V243M695.5 0V243M715.5 0V243M735.5 0V243M755.5 0V243M775.5 0V243M795.5 0V243M815.5 0V243M835.5 0V243M855.5 0V243M875.5 0V243M895.5 0V243M915.5 0V243M935.5 0V243M955.5 0V243M975.5 0V243M995.5 0V243M1015.5 0V243M1035.5 0V243M1055.5 0V243M1075.5 0V243M1095.5 0V243M1115.5 0V243M1135.5 0V243M1155.5 0V243M1175.5 0V243M1195.5 0V243M1215.5 0V243M1235.5 0V243M1255.5 0V243M1275.5 0V243M1295.5 0V243M1315.5 0V243M1335.5 0V243M1355.5 0V243M1375.5 0V243M1395.5 0V243M1415.5 0V243M1435.5 0V243M1455.5 0V243M1475.5 0V243M1495.5 0V243M1515.5 0V243M1535.5 0V243M1555.5 0V243M1575.5 0V243M1595.5 0V243M0 222.5H1597M0 202.5H1597M0 182.5H1597M0 162.5H1597M0 142.5H1597M0 122.5H1597M0 102.5H1597M0 82.5H1597M0 62.5H1597M0 42.5H1597M0 22.5H1597M0 2.5H1597" stroke="#a9c2ea" stroke-width="1" fill="none"/><path d="M75 189h3v28h3v8h3v-11h3v7h3v-4h3v1h3v2h3v-3h3v3h6v-1h3v1h6v-1h3v1h6v-1h3v1h3v1h6v-2h6v1h3v-2h3v1h6v-2h3v2h9v-2h3v2h6v1h3v-3h3v3h6v1h3v-2h3v1h3v-3h3v1h3v2h6v-1h3v-2h3v3h6v1h3v-2h3v1h3v-3h3v4h6v-4h3v2h3v1h6v-3h3v3h3v-2h3v1h3v1h3v-1h12v2h3v-1h6v1h3v-1h3v-3h6v1h3v2h9v-2h3v1h6v1h3v-3h3v2h3v2h3v-1h6v-1h3v-1h3v2h3v-3h3v1h3v2h3v-2h3v2h6v1h3v-1h3v1h6v-2h6v-1h3v3h3v-2h6v1h3v1h3v-4h3v1h3v3h3v-1h6v-3h6v3h6v-3h3v3h3v-2h3v2h3v-1h3v-2h3v4h3v-1h3v-1h3v1h15v-2h3v2h3v-1h9v2h3v-1h3v-1h3v2h3v-4h3v2h6v2h3v-4h3v2h3v-1h3v2h3v-2h3v1h6v1h3v-3h6v4h3v-1h3v-1h3v-2h3v3h12v-10h3v8h3v1h3v-1h3v3h3v-3h3v1h3v1h9v-2h3v-1h3v2h3v1h3v-3h3v1h6v1h3v1h3v1h3v-1h3v-1h6v1h3v-3h3v1h6v-1h3v2h3v1h6v-3h3v3h3v1h3v-1h3v-1h3v-1h3v3h3v-1h3v-1h3v-1h3v2h3v-1h3v1h6v-3h3v2h3v-1h3v1h3v1h3v-2h3v1h3v1h3v-2h3v2h3v-1h3v-1h3v2h3v-1h3v-2h3v2h3v2h3v-2h12v-2h3v1h3v2h6v-1h3v2h3v-2h3v-1h3v2h3v-3h3v2h6v1h3v-1h6v1h3v-3h6v1h3v2h3v-1h3v1h9v-2h3v1h3v2h3v-1h3v-2h3v2h3v-2h3v-1h3v3h6v-1h3v1h3v1h3v-2h6v1h6v1h3v-3h3v-1h3v3h6v1h3v-1h3v1h3v-1h3v-3h3v4h3v-3h3v2h3v-3h3v4h3v-1h3v-3h3v2h6v1h3v-1h3v1h6v-1h6v1h6v-3h3v2h3v1h3v-2h3v2h3v1h6v-2h3v1h3v-2h3v1h3v1h3v1h3v-4h3v3h9v-1h3v2h3v-1h3v-1h3v-1h3v-1h3v3h3v-3h3v3h3v-1h3v-1h3v2h6v-3h3v4h9v-1h6v-3h3v1h3v2h3v1h3v-2h3v-1h3v2h3v-3h3v4h3v-1h9v1h3v-3h3v2h3v-2h3v2h3v1h3v-1h3v-2h6v2h9v-1h3v2h3v-4h3v3h6v-1h3v1h15v-12h3v6h3v4h3v2h3v-3h3v3h3v-1h3v1h3v-2h9v2h9v-1h3v-1h3v-1h3v3h3v-3h3v3h6v-1h3v-2h3v2h3v2h3v-3h3v-1h3v3h3v1h3v-2h3v-2h3v2h3v-2h3v4h3v-1h3v1h3v-4h3v4h3v-1h9v-2h3v-1h3v3h3v-3h3v4h3v-1h3v-1h3v1h3v-2h3v3h3v-3h3v3h3v-1h6v-3h3v1h3v2h9v-3h6v2h3v1h3v-1h3v-1h3v1h3v2h3v-2h3v1h6v-2h3v2h3v-3h3v3h12v-2h3v2h3v-1h3v2h3v-2h3v-2h3v2h3v2h3v-2h3v1h3v-1h3v1h6v-1h3v1h3v-1h3v1h3v1h3v-2h3v-2h3v3h9v-1h3v1h3v1h3v-4h3v3h3v-1h6v1h6v-2h3v1h6v1h3v1h3v-2h6v-2h3v3h12v-1h3v-30h3v31h3v-34h3v17h3v17h3v-2h3v1h3v2h3v-4h3v2h3v-1h3v2h6v-1h3v2h3v-2h3v-1h3" stroke="#0080ff" stroke-width="1" fill="none"/></svg><div class="sh"></div></div><div class="sd" style="height:246px"><div class="fd" style="top:1px;width:115px">100.000</div><div class="sw" style="left:14.6px;top:75.30000000000001px"><i style="position:absolute;left:.5px;top:.5px;right:.5px;bottom:.5px;border-radius:2px;background:#0080ff"></i></div><div class="sw" style="left:50.6px;top:75.30000000000001px"><i style="position:absolute;left:.5px;top:.5px;right:.5px;bottom:.5px;border-radius:2px;background:#e0f5fc"></i></div><div class="sw" style="left:86.6px;top:75.30000000000001px"><i style="position:absolute;left:.5px;top:.5px;right:.5px;bottom:.5px;border-radius:2px;background:#abc4e9"></i></div><div class="fd" style="top:105px;width:113px">9.957 W</div><div class="gb" style="left:6px;top:163px;width:65px">Auto Fit</div><div class="gb" style="left:73px;top:163px;width:50px">Reset</div><div class="fd" style="top:217px;width:115px">0.000</div></div></div><div class="win gw" style="top:1237px;height:303px"><div class="tb"><svg class="lg" style="left:13.4px;top:11.3px" viewBox="0 0 25 25"><defs><linearGradient id="lg5" x1="0" y1="0" x2="0" y2="1"><stop offset="0" stop-color="#a9d8f2"/><stop offset=".3" stop-color="#6db3dc"/><stop offset=".62" stop-color="#1580bb"/><stop offset="1" stop-color="#0a5f93"/></linearGradient></defs><rect x=".3" y=".3" width="24.4" height="24.4" rx="3.6" fill="#151515"/><path d="M.3 14.6V3.9A3.6 3.6 0 0 1 3.9 .3H21.1A3.6 3.6 0 0 1 24.7 3.9V14.6Z" fill="url(#lg5)"/><path d="M5.2 2.5h3.1v10H5.2zM10.5 4.3l2.2.6 1.2 2.2v5.4h-3.4zM5.2 15.7h3.2v7.6H7.4a2.2 2.2 0 0 1-2.2-2.2zM10.5 15.7h3.3v7.6h-1.1a2.2 2.2 0 0 1-2.2-2.2zM16 15.7h3.5v5a2.6 2.6 0 0 1-2.6 2.6H16z" fill="#fff"/><circle cx="17.8" cy="11" r="1.55" fill="#fff"/></svg><span class="tt" style="left:44.8px;top:11.6px;letter-spacing:.03px">GPU Clock</span><svg class="cap" style="left:1693.5px;top:10px" width="30" height="30"><path d="M7.6 7.3l14.4 14.4M22 7.3L7.6 21.7"/></svg></div><div class="ga" style="height:248px"><svg width="1597" height="246" shape-rendering="crispEdges"><path d="M75 224h3v-136h3v136h3v-185h3v153h3v-122h3v11h3v-2h6v4h3v-21h3v-11h3v6h3v16h3v7h3v1h3v-1h6v1h3v-17h3v-15h3v18h3v6h3v7h12v6h3v-19h3v-27h3v20h3v12h3v9h3v-1h9v-2h3v-10h3v-28h3v26h3v3h3v11h3v-1h3v-1h3v1h6v-19h3v-12h3v11h3v17h3v3h3v1h3v-1h3v-1h3v7h3v-18h3v-26h3v27h3v8h3v5h3v-3h3v1h3v-1h3v6h3v-17h3v-29h3v27h3v8h3v7h3v1h3v-2h3v1h3v3h3v-24h3v-21h3v25h3v10h3v6h6v-1h3v1h6v-16h3v-16h3v12h3v12h3v8h3v-1h3v2h3v-1h3v1h3v-18h3v-14h3v8h3v12h3v12h6v-2h3v2h3v3h3v-22h3v-16h3v9h3v15h3v10h3v2h3v-1h6v-2h3v-19h3v-12h3v19h3v7h3v6h6v1h3v-1h6v-16h3v-22h3v25h3v4h3v10h3v-1h3v1h3v1h3v4h3v-19h3v-19h3v19h3v4h3v11h3v-3h3v2h6v1h3v-15h3v-27h3v21h3v13h3v6h6v1h3v1h3v3h3v-25h3v-17h3v21h3v11h3v5h3v1h3v-1h6v3h3v-16h3v-22h3v13h3v18h3v4h3v2h3v-1h3v-2h3v6h3v-17h3v-19h3v6h3v20h3v4h3v1h3v1h6v2h3v-27h3v-14h3v11h3v22h3v7h3v-1h9v-1h3v-20h3v-20h3v24h3v8h3v10h6v-1h3v1h3v-1h3v-19h3v-24h3v29h3v5h3v9h3v-2h6v3h3v-3h3v-9h3v-26h3v12h3v20h3v4h3v1h3v-1h9v-18h3v-17h3v15h3v12h3v10h3v-3h3v2h3v-1h3v3h3v-16h3v-24h3v23h3v4h3v10h3v-1h3v2h3v-1h3v4h3v-22h3v-17h3v9h3v16h3v9h3v3h3v-2h3v-1h3v1h3v-11h3v-27h3v20h3v14h3v4h3v1h3v-1h9v-22h3v-10h3v15h3v13h3v3h3v2h3v-1h3v2h3v3h3v-21h3v-14h3v13h3v11h3v7h3v-1h3v-1h3v3h3v3h3v-23h3v-15h3v9h3v19h3v5h3v1h9v-1h3v-11h3v-19h3v8h3v14h3v9h6v-2h3v1h3v2h3v-23h3v-11h3v16h3v12h3v4h3v1h6v1h3v4h3v-24h3v-17h3v20h3v10h3v7h3v-1h6v-2h3v2h3v-21h3v-18h3v17h3v13h3v8h3v1h6v-1h3v2h3v-14h3v-27h3v18h3v17h3v5h3v-1h3v1h3v-1h3v3h3v-21h3v-16h3v15h3v13h3v8h3v-1h9v5h3v-21h3v-21h3v17h3v11h3v8h6v1h3v1h3v-1h3v-18h3v-18h3v12h3v15h3v9h3v1h3v-1h6v2h3v-16h3v-20h3v13h3v10h3v11h6v1h3v-2h3v5h3v-21h3v-24h3v24h3v10h3v7h3v-1h6v1h3v-1h3v-12h3v-30h3v21h3v16h3v5h6v1h3v-1h3v1h3v-16h3v-19h3v19h3v5h3v10h3v1h6v-1h3v-1h3v-10h3v-26h3v16h3v16h3v5h9v2h6v-18h3v-18h3v7h3v19h3v8h3v-1h6v1h3v2h3v-13h3v-21h3v9h3v17h3v7h3v-2h3v2h6v-2h3v-11h3v-30h3v17h3v17h3v9h3v-1h3v2h6v2h3v-19h3v-23h3v15h3v18h3v5h3v1h3v1h3v-3h3v5h3v-20h3v-21h3v19h3v11h3v8h6v-1h3v-1h3v3h3v-25h3v-13h3v20h3v13h3v5h6v-1h3v1h3v4h3v-26h3v-12h3v18h3v10h3v4h6v1h6v-1h3v-14h3v-23h3v17h3v10h3v12h6v-2h3v1h3v-1h3v-13h3v-16h3v11h3v14h3v6h6v-2h6v2h3v-14h3v-29h3v20h3v18h3v5h3v-1h3v1h3v-1h3v1h3v-13h3v-29h3v25h3v8h3v7h3v1h6v-2h6v-18h3v-10h3v8h3v16h3v5h3v1h3v1h3v-1h3v2h3v-12h3v-29h3v20h3v14h3v6h3v-2h3v2h3v-1h6v-10h3v-21h3v9h3V248H75Z" fill="#99b399"/><path d="M15.5 0V246M35.5 0V246M55.5 0V246M75.5 0V246M95.5 0V246M115.5 0V246M135.5 0V246M155.5 0V246M175.5 0V246M195.5 0V246M215.5 0V246M235.5 0V246M255.5 0V246M275.5 0V246M295.5 0V246M315.5 0V246M335.5 0V246M355.5 0V246M375.5 0V246M395.5 0V246M415.5 0V246M435.5 0V246M455.5 0V246M475.5 0V246M495.5 0V246M515.5 0V246M535.5 0V246M555.5 0V246M575.5 0V246M595.5 0V246M615.5 0V246M635.5 0V246M655.5 0V246M675.5 0V246M695.5 0V246M715.5 0V246M735.5 0V246M755.5 0V246M775.5 0V246M795.5 0V246M815.5 0V246M835.5 0V246M855.5 0V246M875.5 0V246M895.5 0V246M915.5 0V246M935.5 0V246M955.5 0V246M975.5 0V246M995.5 0V246M1015.5 0V246M1035.5 0V246M1055.5 0V246M1075.5 0V246M1095.5 0V246M1115.5 0V246M1135.5 0V246M1155.5 0V246M1175.5 0V246M1195.5 0V246M1215.5 0V246M1235.5 0V246M1255.5 0V246M1275.5 0V246M1295.5 0V246M1315.5 0V246M1335.5 0V246M1355.5 0V246M1375.5 0V246M1395.5 0V246M1415.5 0V246M1435.5 0V246M1455.5 0V246M1475.5 0V246M1495.5 0V246M1515.5 0V246M1535.5 0V246M1555.5 0V246M1575.5 0V246M1595.5 0V246M0 225.5H1597M0 205.5H1597M0 185.5H1597M0 165.5H1597M0 145.5H1597M0 125.5H1597M0 105.5H1597M0 85.5H1597M0 65.5H1597M0 45.5H1597M0 25.5H1597M0 5.5H1597" stroke="#a9c2ea" stroke-width="1" fill="none"/><path d="M75 224h3v-136h3v136h3v-185h3v153h3v-122h3v11h3v-2h6v4h3v-21h3v-11h3v6h3v16h3v7h3v1h3v-1h6v1h3v-17h3v-15h3v18h3v6h3v7h12v6h3v-19h3v-27h3v20h3v12h3v9h3v-1h9v-2h3v-10h3v-28h3v26h3v3h3v11h3v-1h3v-1h3v1h6v-19h3v-12h3v11h3v17h3v3h3v1h3v-1h3v-1h3v7h3v-18h3v-26h3v27h3v8h3v5h3v-3h3v1h3v-1h3v6h3v-17h3v-29h3v27h3v8h3v7h3v1h3v-2h3v1h3v3h3v-24h3v-21h3v25h3v10h3v6h6v-1h3v1h6v-16h3v-16h3v12h3v12h3v8h3v-1h3v2h3v-1h3v1h3v-18h3v-14h3v8h3v12h3v12h6v-2h3v2h3v3h3v-22h3v-16h3v9h3v15h3v10h3v2h3v-1h6v-2h3v-19h3v-12h3v19h3v7h3v6h6v1h3v-1h6v-16h3v-22h3v25h3v4h3v10h3v-1h3v1h3v1h3v4h3v-19h3v-19h3v19h3v4h3v11h3v-3h3v2h6v1h3v-15h3v-27h3v21h3v13h3v6h6v1h3v1h3v3h3v-25h3v-17h3v21h3v11h3v5h3v1h3v-1h6v3h3v-16h3v-22h3v13h3v18h3v4h3v2h3v-1h3v-2h3v6h3v-17h3v-19h3v6h3v20h3v4h3v1h3v1h6v2h3v-27h3v-14h3v11h3v22h3v7h3v-1h9v-1h3v-20h3v-20h3v24h3v8h3v10h6v-1h3v1h3v-1h3v-19h3v-24h3v29h3v5h3v9h3v-2h6v3h3v-3h3v-9h3v-26h3v12h3v20h3v4h3v1h3v-1h9v-18h3v-17h3v15h3v12h3v10h3v-3h3v2h3v-1h3v3h3v-16h3v-24h3v23h3v4h3v10h3v-1h3v2h3v-1h3v4h3v-22h3v-17h3v9h3v16h3v9h3v3h3v-2h3v-1h3v1h3v-11h3v-27h3v20h3v14h3v4h3v1h3v-1h9v-22h3v-10h3v15h3v13h3v3h3v2h3v-1h3v2h3v3h3v-21h3v-14h3v13h3v11h3v7h3v-1h3v-1h3v3h3v3h3v-23h3v-15h3v9h3v19h3v5h3v1h9v-1h3v-11h3v-19h3v8h3v14h3v9h6v-2h3v1h3v2h3v-23h3v-11h3v16h3v12h3v4h3v1h6v1h3v4h3v-24h3v-17h3v20h3v10h3v7h3v-1h6v-2h3v2h3v-21h3v-18h3v17h3v13h3v8h3v1h6v-1h3v2h3v-14h3v-27h3v18h3v17h3v5h3v-1h3v1h3v-1h3v3h3v-21h3v-16h3v15h3v13h3v8h3v-1h9v5h3v-21h3v-21h3v17h3v11h3v8h6v1h3v1h3v-1h3v-18h3v-18h3v12h3v15h3v9h3v1h3v-1h6v2h3v-16h3v-20h3v13h3v10h3v11h6v1h3v-2h3v5h3v-21h3v-24h3v24h3v10h3v7h3v-1h6v1h3v-1h3v-12h3v-30h3v21h3v16h3v5h6v1h3v-1h3v1h3v-16h3v-19h3v19h3v5h3v10h3v1h6v-1h3v-1h3v-10h3v-26h3v16h3v16h3v5h9v2h6v-18h3v-18h3v7h3v19h3v8h3v-1h6v1h3v2h3v-13h3v-21h3v9h3v17h3v7h3v-2h3v2h6v-2h3v-11h3v-30h3v17h3v17h3v9h3v-1h3v2h6v2h3v-19h3v-23h3v15h3v18h3v5h3v1h3v1h3v-3h3v5h3v-20h3v-21h3v19h3v11h3v8h6v-1h3v-1h3v3h3v-25h3v-13h3v20h3v13h3v5h6v-1h3v1h3v4h3v-26h3v-12h3v18h3v10h3v4h6v1h6v-1h3v-14h3v-23h3v17h3v10h3v12h6v-2h3v1h3v-1h3v-13h3v-16h3v11h3v14h3v6h6v-2h6v2h3v-14h3v-29h3v20h3v18h3v5h3v-1h3v1h3v-1h3v1h3v-13h3v-29h3v25h3v8h3v7h3v1h6v-2h6v-18h3v-10h3v8h3v16h3v5h3v1h3v1h3v-1h3v2h3v-12h3v-29h3v20h3v14h3v6h3v-2h3v2h3v-1h6v-10h3v-21h3v9h3" stroke="#008000" stroke-width="1" fill="none"/></svg><div class="sh"></div></div><div class="sd" style="height:249px"><div class="fd" style="top:1px;width:115px">2200.0</div><div class="sw" style="left:14.6px;top:78.30000000000001px"><i style="position:absolute;left:.5px;top:.5px;right:.5px;bottom:.5px;border-radius:2px;background:#008000"></i></div><div class="sw" style="left:50.6px;top:78.30000000000001px"><i style="position:absolute;left:.5px;top:.5px;right:.5px;bottom:.5px;border-radius:2px;background:#e0f5fc"></i></div><div class="sw" style="left:86.6px;top:78.30000000000001px"><i style="position:absolute;left:.5px;top:.5px;right:.5px;bottom:.5px;border-radius:2px;background:#abc4e9"></i></div><div class="fd" style="top:108px;width:113px">1,770.0 MHz</div><div class="gb" style="left:6px;top:166px;width:65px">Auto Fit</div><div class="gb" style="left:73px;top:166px;width:50px">Reset</div><div class="fd" style="top:220px;width:115px">0.0</div></div></div><div class="win gw" style="top:1550px;height:290px"><div class="tb"><svg class="lg" style="left:13.4px;top:11.3px" viewBox="0 0 25 25"><defs><linearGradient id="lg6" x1="0" y1="0" x2="0" y2="1"><stop offset="0" stop-color="#a9d8f2"/><stop offset=".3" stop-color="#6db3dc"/><stop offset=".62" stop-color="#1580bb"/><stop offset="1" stop-color="#0a5f93"/></linearGradient></defs><rect x=".3" y=".3" width="24.4" height="24.4" rx="3.6" fill="#151515"/><path d="M.3 14.6V3.9A3.6 3.6 0 0 1 3.9 .3H21.1A3.6 3.6 0 0 1 24.7 3.9V14.6Z" fill="url(#lg6)"/><path d="M5.2 2.5h3.1v10H5.2zM10.5 4.3l2.2.6 1.2 2.2v5.4h-3.4zM5.2 15.7h3.2v7.6H7.4a2.2 2.2 0 0 1-2.2-2.2zM10.5 15.7h3.3v7.6h-1.1a2.2 2.2 0 0 1-2.2-2.2zM16 15.7h3.5v5a2.6 2.6 0 0 1-2.6 2.6H16z" fill="#fff"/><circle cx="17.8" cy="11" r="1.55" fill="#fff"/></svg><span class="tt" style="left:44.8px;top:11.6px;letter-spacing:.03px">GPU Temperature</span><svg class="cap" style="left:1693.5px;top:10px" width="30" height="30"><path d="M7.6 7.3l14.4 14.4M22 7.3L7.6 21.7"/></svg></div><div class="ga" style="height:235px"><svg width="1597" height="233" shape-rendering="crispEdges"><path d="M75 111h3v-1h6v-5h3v-5h3v-1h3v-12h3v-2h3v-1h3v-2h3v-1h3v-1h3v-1h3v-1h3v-2h6v-2h6v-1h3v3h3v-4h3v-1h6v-2h12v-1h3v3h3v-2h3v-2h6v-1h3v-1h12v2h3v-2h3v-2h6v-1h6v-1h3v1h3v-1h3v5h3v-4h3v-1h6v-2h9v1h6v3h3v-3h3v-1h6v-1h3v-1h6v1h6v3h3v-3h3v-1h6v-1h3v-1h6v1h6v4h3v-3h3v-2h6v-1h15v3h3v-2h3v-2h6v-1h15v3h3v-1h3v-2h6v-1h3v-1h6v1h6v2h3v-1h3v-1h6v-1h15v2h3v-1h3v-1h6v-1h6v-1h3v1h6v4h3v-3h3v-1h12v-1h9v3h3v-1h3v-2h6v-1h9v1h3v-1h3v4h3v-3h3v-1h6v-1h9v1h6v2h3v-2h3v-1h6v-1h6v1h9v4h3v-2h3v-2h6v-1h9v1h3v-1h3v3h3v-2h3v-1h9v-1h3v1h9v2h3v-1h3v-1h6v-1h6v1h9v3h3v-3h6v-1h3v-1h3v1h12v4h3v-3h3v-1h6v-1h3v1h12v4h3v-3h3v-1h6v-1h3v1h3v-1h3v1h3v-1h3v5h3v-3h3v-2h6v-1h6v1h9v3h3v-2h3v-1h6v-1h9v1h6v2h3v-2h6v-1h9v-1h3v1h6v4h3v-2h3v-2h9v-1h6v1h6v3h3v-1h3v-2h6v-1h6v-1h3v1h6v3h3v-2h3v-1h21v4h3v-3h3v-1h6v-1h9v1h6v2h3v-2h6v-1h6v-1h3v1h9v4h3v-3h3v-1h9v-1h6v1h6v3h3v-2h3v-1h9v-1h6v1h6v4h3v-3h3v-1h6v-1h9v1h6v4h3v-3h3v-1h9v-1h6v1h6v2h3v-1h3v-1h6v-2h3v1h6v1h6v3h3v-2h3v-2h6v-1h3v1h12v3h3v-1h3v-2h6v-1h9v1h6v3h3v-2h3v-1h12v-1h3v1h6v3h3v-2h3v-1h6v-1h9v1h6v3h3v-2h3v-1h6v-1h6v1h9v2h3v-1h3v-1h6v-1h9v1h3v-1h3v4h3v-3h3v-1h21v3h3v-1h3v-2h9v-1h3v1h9v3h3v-2h3v-1h9v-1h6v1h6v2h3v-1h3v-1h9v-1h6v1h6v4h3v-3h3v-1h6v-1h9v1h6v2h3v-2h9v-1h3v-1h3v1h9v3h3v-1h3v-2h12v-1h3v1h6v3h3v-1h3v-2h6v-1h3v1h12v3h3v-2h3v-1h6v-1h9v1h6v3h3v-1h3v-2h6v-1h9v1h6v4h3v-3h3v-1h6v-1h9v1h6v3h3v-3h9v-1h15v3h3v-1h3v-2h21v4h3v-2h3v-2h21v3h3v-1h3v-2h3V235H75Z" fill="#ff99b3"/><path d="M15.5 0V233M35.5 0V233M55.5 0V233M75.5 0V233M95.5 0V233M115.5 0V233M135.5 0V233M155.5 0V233M175.5 0V233M195.5 0V233M215.5 0V233M235.5 0V233M255.5 0V233M275.5 0V233M295.5 0V233M315.5 0V233M335.5 0V233M355.5 0V233M375.5 0V233M395.5 0V233M415.5 0V233M435.5 0V233M455.5 0V233M475.5 0V233M495.5 0V233M515.5 0V233M535.5 0V233M555.5 0V233M575.5 0V233M595.5 0V233M615.5 0V233M635.5 0V233M655.5 0V233M675.5 0V233M695.5 0V233M715.5 0V233M735.5 0V233M755.5 0V233M775.5 0V233M795.5 0V233M815.5 0V233M835.5 0V233M855.5 0V233M875.5 0V233M895.5 0V233M915.5 0V233M935.5 0V233M955.5 0V233M975.5 0V233M995.5 0V233M1015.5 0V233M1035.5 0V233M1055.5 0V233M1075.5 0V233M1095.5 0V233M1115.5 0V233M1135.5 0V233M1155.5 0V233M1175.5 0V233M1195.5 0V233M1215.5 0V233M1235.5 0V233M1255.5 0V233M1275.5 0V233M1295.5 0V233M1315.5 0V233M1335.5 0V233M1355.5 0V233M1375.5 0V233M1395.5 0V233M1415.5 0V233M1435.5 0V233M1455.5 0V233M1475.5 0V233M1495.5 0V233M1515.5 0V233M1535.5 0V233M1555.5 0V233M1575.5 0V233M1595.5 0V233M0 212.5H1597M0 192.5H1597M0 172.5H1597M0 152.5H1597M0 132.5H1597M0 112.5H1597M0 92.5H1597M0 72.5H1597M0 52.5H1597M0 32.5H1597M0 12.5H1597" stroke="#a9c2ea" stroke-width="1" fill="none"/><path d="M75 111h3v-1h6v-5h3v-5h3v-1h3v-12h3v-2h3v-1h3v-2h3v-1h3v-1h3v-1h3v-1h3v-2h6v-2h6v-1h3v3h3v-4h3v-1h6v-2h12v-1h3v3h3v-2h3v-2h6v-1h3v-1h12v2h3v-2h3v-2h6v-1h6v-1h3v1h3v-1h3v5h3v-4h3v-1h6v-2h9v1h6v3h3v-3h3v-1h6v-1h3v-1h6v1h6v3h3v-3h3v-1h6v-1h3v-1h6v1h6v4h3v-3h3v-2h6v-1h15v3h3v-2h3v-2h6v-1h15v3h3v-1h3v-2h6v-1h3v-1h6v1h6v2h3v-1h3v-1h6v-1h15v2h3v-1h3v-1h6v-1h6v-1h3v1h6v4h3v-3h3v-1h12v-1h9v3h3v-1h3v-2h6v-1h9v1h3v-1h3v4h3v-3h3v-1h6v-1h9v1h6v2h3v-2h3v-1h6v-1h6v1h9v4h3v-2h3v-2h6v-1h9v1h3v-1h3v3h3v-2h3v-1h9v-1h3v1h9v2h3v-1h3v-1h6v-1h6v1h9v3h3v-3h6v-1h3v-1h3v1h12v4h3v-3h3v-1h6v-1h3v1h12v4h3v-3h3v-1h6v-1h3v1h3v-1h3v1h3v-1h3v5h3v-3h3v-2h6v-1h6v1h9v3h3v-2h3v-1h6v-1h9v1h6v2h3v-2h6v-1h9v-1h3v1h6v4h3v-2h3v-2h9v-1h6v1h6v3h3v-1h3v-2h6v-1h6v-1h3v1h6v3h3v-2h3v-1h21v4h3v-3h3v-1h6v-1h9v1h6v2h3v-2h6v-1h6v-1h3v1h9v4h3v-3h3v-1h9v-1h6v1h6v3h3v-2h3v-1h9v-1h6v1h6v4h3v-3h3v-1h6v-1h9v1h6v4h3v-3h3v-1h9v-1h6v1h6v2h3v-1h3v-1h6v-2h3v1h6v1h6v3h3v-2h3v-2h6v-1h3v1h12v3h3v-1h3v-2h6v-1h9v1h6v3h3v-2h3v-1h12v-1h3v1h6v3h3v-2h3v-1h6v-1h9v1h6v3h3v-2h3v-1h6v-1h6v1h9v2h3v-1h3v-1h6v-1h9v1h3v-1h3v4h3v-3h3v-1h21v3h3v-1h3v-2h9v-1h3v1h9v3h3v-2h3v-1h9v-1h6v1h6v2h3v-1h3v-1h9v-1h6v1h6v4h3v-3h3v-1h6v-1h9v1h6v2h3v-2h9v-1h3v-1h3v1h9v3h3v-1h3v-2h12v-1h3v1h6v3h3v-1h3v-2h6v-1h3v1h12v3h3v-2h3v-1h6v-1h9v1h6v3h3v-1h3v-2h6v-1h9v1h6v4h3v-3h3v-1h6v-1h9v1h6v3h3v-3h9v-1h15v3h3v-1h3v-2h21v4h3v-2h3v-2h21v3h3v-1h3v-2h3" stroke="#ff0080" stroke-width="1" fill="none"/></svg><div class="sh"></div></div><div class="sd" style="height:236px"><div class="fd" style="top:1px;width:115px">100.0</div><div class="sw" style="left:14.6px;top:65.30000000000001px"><i style="position:absolute;left:.5px;top:.5px;right:.5px;bottom:.5px;border-radius:2px;background:#ff0080"></i></div><div class="sw" style="left:50.6px;top:65.30000000000001px"><i style="position:absolute;left:.5px;top:.5px;right:.5px;bottom:.5px;border-radius:2px;background:#e0f5fc"></i></div><div class="sw" style="left:86.6px;top:65.30000000000001px"><i style="position:absolute;left:.5px;top:.5px;right:.5px;bottom:.5px;border-radius:2px;background:#abc4e9"></i></div><div class="fd" style="top:95px;width:113px">83.3 °C</div><div class="gb" style="left:6px;top:153px;width:65px">Auto Fit</div><div class="gb" style="left:73px;top:153px;width:50px">Reset</div><div class="fd" style="top:207px;width:115px">0.0</div></div><div style="position:absolute;left:0;top:0;width:100%;height:100px;background:linear-gradient(rgba(0,0,0,.175) 0,rgba(0,0,0,.065) 50px,rgba(0,0,0,.045) 60px,rgba(0,0,0,0) 100px)"></div></div><div class="win gw" style="top:1850px;height:303px"><div class="tb"><svg class="lg" style="left:13.4px;top:11.3px" viewBox="0 0 25 25"><defs><linearGradient id="lg7" x1="0" y1="0" x2="0" y2="1"><stop offset="0" stop-color="#a9d8f2"/><stop offset=".3" stop-color="#6db3dc"/><stop offset=".62" stop-color="#1580bb"/><stop offset="1" stop-color="#0a5f93"/></linearGradient></defs><rect x=".3" y=".3" width="24.4" height="24.4" rx="3.6" fill="#151515"/><path d="M.3 14.6V3.9A3.6 3.6 0 0 1 3.9 .3H21.1A3.6 3.6 0 0 1 24.7 3.9V14.6Z" fill="url(#lg7)"/><path d="M5.2 2.5h3.1v10H5.2zM10.5 4.3l2.2.6 1.2 2.2v5.4h-3.4zM5.2 15.7h3.2v7.6H7.4a2.2 2.2 0 0 1-2.2-2.2zM10.5 15.7h3.3v7.6h-1.1a2.2 2.2 0 0 1-2.2-2.2zM16 15.7h3.5v5a2.6 2.6 0 0 1-2.6 2.6H16z" fill="#fff"/><circle cx="17.8" cy="11" r="1.55" fill="#fff"/></svg><span class="tt" style="left:44.8px;top:11.6px;letter-spacing:.03px">GPU Power</span><svg class="cap" style="left:1693.5px;top:10px" width="30" height="30"><path d="M7.6 7.3l14.4 14.4M22 7.3L7.6 21.7"/></svg></div><div class="ga" style="height:248px"><svg width="1597" height="246" shape-rendering="crispEdges"><path d="M75 219h3v-20h3v17h3v-67h3v24h3v-99h12v-1h3v4h3v16h3v18h3v-33h3v-4h3v-1h9v1h3v2h3v18h3v18h3v-36h3v-3h9v1h6v3h3v18h3v19h3v-36h3v-4h6v-1h6v2h3v2h3v15h3v20h3v-32h3v-6h9v-1h3v1h3v2h3v19h3v18h3v-36h3v-3h3v-1h6v1h3v1h3v4h3v11h3v22h3v-32h3v-5h3v-2h3v1h3v-1h3v1h3v5h3v14h3v20h3v-33h3v-6h6v1h3v-1h3v-1h3v6h3v14h3v18h3v-31h3v-7h3v2h3v-1h3v1h3v-1h3v2h3v15h3v23h3v-34h3v-6h3v-1h3v1h3v-1h3v1h3v2h3v16h3v23h3v-37h3v-5h3v1h3v-1h6v1h3v3h3v16h3v21h3v-36h3v-5h3v1h3v-1h3v1h3v-1h3v3h3v18h3v20h3v-36h3v-4h3v1h3v-1h3v1h3v-2h3v6h3v12h3v19h3v-34h3v-2h3v-1h3v2h3v-1h6v2h3v15h3v18h3v-31h3v-3h6v-2h3v1h3v-1h3v4h3v13h3v20h3v-30h3v-6h3v1h3v-2h3v2h3v-2h3v4h3v14h3v24h3v-35h3v-7h6v1h3v1h3v-2h3v3h3v15h3v21h3v-32h3v-7h3v1h3v-1h3v1h3v-1h3v6h3v8h3v18h3v-27h3v-4h3v-1h3v1h6v1h3v4h3v11h3v15h3v-28h3v-3h3v-1h3v1h6v1h3v4h3v13h3v12h3v-24h3v-7h3v1h6v1h3v-2h3v4h3v14h3v16h3v-31h3v-2h6v-1h3v2h6v2h3v15h3v14h3v-26h3v-6h12v-1h3v4h3v10h3v19h3v-29h3v-4h3v2h6v-2h3v1h3v5h3v7h3v16h3v-26h3v-2h6v1h3v-2h6v6h3v7h3v15h3v-25h3v-2h6v1h3v-2h6v4h3v12h3v12h3v-25h3v-2h6v-1h3v2h3v-1h3v3h3v12h3v14h3v-27h3v-1h3v-1h3v1h3v-2h6v4h3v10h3v17h3v-27h3v-3h3v-1h3v2h3v-2h6v6h3v7h3v11h3v-17h3v-6h12v1h3v2h3v11h3v9h3v-20h3v-4h3v1h3v1h3v-1h6v5h3v7h3v14h3v-20h3v-6h6v-1h3v2h3v-1h3v2h3v11h3v11h3v-21h3v-3h3v-1h3v1h3v1h3v-1h3v5h3v8h3v10h3v-19h3v-4h6v1h6v-1h3v5h3v6h3v11h3v-19h3v-4h6v1h9v2h3v12h3v12h3v-22h3v-3h3v-1h9v-1h3v3h3v12h3v11h3v-22h3v-3h3v1h3v-1h3v-1h6v3h3v9h3v15h3v-22h3v-3h3v-1h3v-1h3v1h3v-1h3v6h3v7h3v12h3v-22h3v-3h9v1h6v5h3v8h3v9h3v-19h3v-4h9v2h3v-2h3v4h3v8h3v13h3v-21h3v-2h3v-2h6v2h3v-2h3v4h3v11h3v9h3v-20h3v-4h3v1h3v1h3v-1h3v-1h3v6h3v6h3v16h3v-25h3v-1h3v-1h9v-1h3v3h3v11h3v14h3v-21h3v-5h3v-1h3v-1h3v1h6v3h3v10h3v14h3v-24h3v-3h6v-1h6v2h3v2h3v10h3v10h3v-21h3v-2h3v-1h3v2h6v-2h3v6h3v9h3v9h3v-19h3v-4h3v-1h3v1h6v-1h3v3h3v11h3v10h3v-17h3v-6h3v-1h6v1h3v-1h3v3h3v12h3v12h3v-23h3v-3h3v-1h3v1h3v1h3v-1h3v2h3v13h3v8h3v-21h3v-3h6v1h3v1h3v-2h3v4h3v7h3v17h3v-24h3v-4h12v2h3v1h3v10h3v15h3v-21h3v-6h3v-1h3v1h3v-1h6v4h3v9h3v10h3v-20h3v-3h3v1h3v-1h6v2h3v1h3v11h3v13h3v-22h3v-4h9v1h3v-1h3v3h3v12h3v12h3v-25h3v-3h3v2h3v-2h3v1h6v5h3v5h3v15h3v-19h3v-7h3v1h9v-1h3v4h3v7h3v22h3V248H75Z" fill="#b299a6"/><path d="M15.5 0V246M35.5 0V246M55.5 0V246M75.5 0V246M95.5 0V246M115.5 0V246M135.5 0V246M155.5 0V246M175.5 0V246M195.5 0V246M215.5 0V246M235.5 0V246M255.5 0V246M275.5 0V246M295.5 0V246M315.5 0V246M335.5 0V246M355.5 0V246M375.5 0V246M395.5 0V246M415.5 0V246M435.5 0V246M455.5 0V246M475.5 0V246M495.5 0V246M515.5 0V246M535.5 0V246M555.5 0V246M575.5 0V246M595.5 0V246M615.5 0V246M635.5 0V246M655.5 0V246M675.5 0V246M695.5 0V246M715.5 0V246M735.5 0V246M755.5 0V246M775.5 0V246M795.5 0V246M815.5 0V246M835.5 0V246M855.5 0V246M875.5 0V246M895.5 0V246M915.5 0V246M935.5 0V246M955.5 0V246M975.5 0V246M995.5 0V246M1015.5 0V246M1035.5 0V246M1055.5 0V246M1075.5 0V246M1095.5 0V246M1115.5 0V246M1135.5 0V246M1155.5 0V246M1175.5 0V246M1195.5 0V246M1215.5 0V246M1235.5 0V246M1255.5 0V246M1275.5 0V246M1295.5 0V246M1315.5 0V246M1335.5 0V246M1355.5 0V246M1375.5 0V246M1395.5 0V246M1415.5 0V246M1435.5 0V246M1455.5 0V246M1475.5 0V246M1495.5 0V246M1515.5 0V246M1535.5 0V246M1555.5 0V246M1575.5 0V246M1595.5 0V246M0 225.5H1597M0 205.5H1597M0 185.5H1597M0 165.5H1597M0 145.5H1597M0 125.5H1597M0 105.5H1597M0 85.5H1597M0 65.5H1597M0 45.5H1597M0 25.5H1597M0 5.5H1597" stroke="#a9c2ea" stroke-width="1" fill="none"/><path d="M75 219h3v-20h3v17h3v-67h3v24h3v-99h12v-1h3v4h3v16h3v18h3v-33h3v-4h3v-1h9v1h3v2h3v18h3v18h3v-36h3v-3h9v1h6v3h3v18h3v19h3v-36h3v-4h6v-1h6v2h3v2h3v15h3v20h3v-32h3v-6h9v-1h3v1h3v2h3v19h3v18h3v-36h3v-3h3v-1h6v1h3v1h3v4h3v11h3v22h3v-32h3v-5h3v-2h3v1h3v-1h3v1h3v5h3v14h3v20h3v-33h3v-6h6v1h3v-1h3v-1h3v6h3v14h3v18h3v-31h3v-7h3v2h3v-1h3v1h3v-1h3v2h3v15h3v23h3v-34h3v-6h3v-1h3v1h3v-1h3v1h3v2h3v16h3v23h3v-37h3v-5h3v1h3v-1h6v1h3v3h3v16h3v21h3v-36h3v-5h3v1h3v-1h3v1h3v-1h3v3h3v18h3v20h3v-36h3v-4h3v1h3v-1h3v1h3v-2h3v6h3v12h3v19h3v-34h3v-2h3v-1h3v2h3v-1h6v2h3v15h3v18h3v-31h3v-3h6v-2h3v1h3v-1h3v4h3v13h3v20h3v-30h3v-6h3v1h3v-2h3v2h3v-2h3v4h3v14h3v24h3v-35h3v-7h6v1h3v1h3v-2h3v3h3v15h3v21h3v-32h3v-7h3v1h3v-1h3v1h3v-1h3v6h3v8h3v18h3v-27h3v-4h3v-1h3v1h6v1h3v4h3v11h3v15h3v-28h3v-3h3v-1h3v1h6v1h3v4h3v13h3v12h3v-24h3v-7h3v1h6v1h3v-2h3v4h3v14h3v16h3v-31h3v-2h6v-1h3v2h6v2h3v15h3v14h3v-26h3v-6h12v-1h3v4h3v10h3v19h3v-29h3v-4h3v2h6v-2h3v1h3v5h3v7h3v16h3v-26h3v-2h6v1h3v-2h6v6h3v7h3v15h3v-25h3v-2h6v1h3v-2h6v4h3v12h3v12h3v-25h3v-2h6v-1h3v2h3v-1h3v3h3v12h3v14h3v-27h3v-1h3v-1h3v1h3v-2h6v4h3v10h3v17h3v-27h3v-3h3v-1h3v2h3v-2h6v6h3v7h3v11h3v-17h3v-6h12v1h3v2h3v11h3v9h3v-20h3v-4h3v1h3v1h3v-1h6v5h3v7h3v14h3v-20h3v-6h6v-1h3v2h3v-1h3v2h3v11h3v11h3v-21h3v-3h3v-1h3v1h3v1h3v-1h3v5h3v8h3v10h3v-19h3v-4h6v1h6v-1h3v5h3v6h3v11h3v-19h3v-4h6v1h9v2h3v12h3v12h3v-22h3v-3h3v-1h9v-1h3v3h3v12h3v11h3v-22h3v-3h3v1h3v-1h3v-1h6v3h3v9h3v15h3v-22h3v-3h3v-1h3v-1h3v1h3v-1h3v6h3v7h3v12h3v-22h3v-3h9v1h6v5h3v8h3v9h3v-19h3v-4h9v2h3v-2h3v4h3v8h3v13h3v-21h3v-2h3v-2h6v2h3v-2h3v4h3v11h3v9h3v-20h3v-4h3v1h3v1h3v-1h3v-1h3v6h3v6h3v16h3v-25h3v-1h3v-1h9v-1h3v3h3v11h3v14h3v-21h3v-5h3v-1h3v-1h3v1h6v3h3v10h3v14h3v-24h3v-3h6v-1h6v2h3v2h3v10h3v10h3v-21h3v-2h3v-1h3v2h6v-2h3v6h3v9h3v9h3v-19h3v-4h3v-1h3v1h6v-1h3v3h3v11h3v10h3v-17h3v-6h3v-1h6v1h3v-1h3v3h3v12h3v12h3v-23h3v-3h3v-1h3v1h3v1h3v-1h3v2h3v13h3v8h3v-21h3v-3h6v1h3v1h3v-2h3v4h3v7h3v17h3v-24h3v-4h12v2h3v1h3v10h3v15h3v-21h3v-6h3v-1h3v1h3v-1h6v4h3v9h3v10h3v-20h3v-3h3v1h3v-1h6v2h3v1h3v11h3v13h3v-22h3v-4h9v1h3v-1h3v3h3v12h3v12h3v-25h3v-3h3v2h3v-2h3v1h6v5h3v5h3v15h3v-19h3v-7h3v1h9v-1h3v4h3v7h3v22h3" stroke="#800040" stroke-width="1" fill="none"/></svg><div class="sh"></div></div><div class="sd" style="height:249px"><div class="fd" style="top:1px;width:115px">150.000</div><div class="sw" style="left:14.6px;top:78.30000000000001px"><i style="position:absolute;left:.5px;top:.5px;right:.5px;bottom:.5px;border-radius:2px;background:#800040"></i></div><div class="sw" style="left:50.6px;top:78.30000000000001px"><i style="position:absolute;left:.5px;top:.5px;right:.5px;bottom:.5px;border-radius:2px;background:#e0f5fc"></i></div><div class="sw" style="left:86.6px;top:78.30000000000001px"><i style="position:absolute;left:.5px;top:.5px;right:.5px;bottom:.5px;border-radius:2px;background:#abc4e9"></i></div><div class="fd" style="top:108px;width:113px">83.967 W</div><div class="gb" style="left:6px;top:166px;width:65px">Auto Fit</div><div class="gb" style="left:73px;top:166px;width:50px">Reset</div><div class="fd" style="top:220px;width:115px">0.000</div></div></div><div class="win" id="mw"><div class="tb"><svg class="lg" style="left:14.6px;top:11.3px" viewBox="0 0 25 25"><defs><linearGradient id="lg0" x1="0" y1="0" x2="0" y2="1"><stop offset="0" stop-color="#a9d8f2"/><stop offset=".3" stop-color="#6db3dc"/><stop offset=".62" stop-color="#1580bb"/><stop offset="1" stop-color="#0a5f93"/></linearGradient></defs><rect x=".3" y=".3" width="24.4" height="24.4" rx="3.6" fill="#151515"/><path d="M.3 14.6V3.9A3.6 3.6 0 0 1 3.9 .3H21.1A3.6 3.6 0 0 1 24.7 3.9V14.6Z" fill="url(#lg0)"/><path d="M5.2 2.5h3.1v10H5.2zM10.5 4.3l2.2.6 1.2 2.2v5.4h-3.4zM5.2 15.7h3.2v7.6H7.4a2.2 2.2 0 0 1-2.2-2.2zM10.5 15.7h3.3v7.6h-1.1a2.2 2.2 0 0 1-2.2-2.2zM16 15.7h3.5v5a2.6 2.6 0 0 1-2.6 2.6H16z" fill="#fff"/><circle cx="17.8" cy="11" r="1.55" fill="#fff"/></svg><span class="tt" style="left:46.8px">HWiNFO64 v7.40-5000 Sensor Status [221 values hidden]</span><svg class="cap" style="left:1855px;top:10.5px" width="200" height="26"><path d="M7 13.9h15M88 8.7a2 2 0 0 1 2-2h10.3a2 2 0 0 1 2 2v10.3a2 2 0 0 1-2 2H90a2 2 0 0 1-2-2zM169.4 6.6l14.3 14.3M183.7 6.6L169.4 20.9"/></svg></div><div id="pn"><div class="ls" id="l1"><div class="hd"><span style="left:7.5px;">Sensor</span><span style="right:500.5px;letter-spacing:.08px">Current</span><span style="right:340.5px;letter-spacing:-.02px">Minimum</span><span style="right:180.5px;letter-spacing:-.14px">Maximum</span><span style="right:20.5px;letter-spacing:-.04px">Average</span><i style="left:378px"></i><i style="left:538px"></i><i style="left:698px"></i><i style="left:858px"></i><i style="left:1018px"></i></div><div class="vg" style="left:379px"></div><div class="vg" style="left:539px"></div><div class="vg" style="left:699px"></div><div class="vg" style="left:859px"></div><div class="vg" style="left:1019px"></div><div class="rows"><div class="r h"><div class="c0" style="width:379px"><u style="width:64px"><s class="ev" style="left:13px"></s><s class="chp" style="left:42.7px"></s></u><b style="letter-spacing:.28px">CPU [#0]: Intel Core i7-12700H</b></div><div class="v" style="width:159px"></div><div class="v" style="width:159px"></div><div class="v" style="width:159px"></div><div class="v" style="width:159px"></div></div><div class="r g"><div class="c0" style="width:379px"><u style="width:92px"><s class="er" style="left:37.4px"></s><s class="clk" style="left:67px"></s></u><b style="letter-spacing:-.24px">Core Clocks</b></div><div class="v" style="width:159px;letter-spacing:-.06px">698.3 MHz</div><div class="v" style="width:159px;letter-spacing:-.06px">399.0 MHz</div><div class="v" style="width:159px;letter-spacing:-.04px">4,689.7 MHz</div><div class="v" style="width:159px;letter-spacing:-.04px">1,306.0 MHz</div></div><div class="r w"><div class="c0" style="width:379px"><u style="width:64px"><s class="clk" style="left:39px"></s></u><b style="letter-spacing:-.24px">Bus Clock</b></div><div class="v" style="width:159px;">99.8 MHz</div><div class="v" style="width:159px;">99.8 MHz</div><div class="v" style="width:159px;">99.8 MHz</div><div class="v" style="width:159px;">99.8 MHz</div></div><div class="r g"><div class="c0" style="width:379px"><u style="width:64px"><s class="clk" style="left:39px"></s></u><b style="letter-spacing:-.04px">Ring/LLC Clock</b></div><div class="v" style="width:159px;letter-spacing:-.06px">698.3 MHz</div><div class="v" style="width:159px;letter-spacing:-.06px">399.0 MHz</div><div class="v" style="width:159px;letter-spacing:-.04px">3,990.2 MHz</div><div class="v" style="width:159px;letter-spacing:-.04px">1,381.7 MHz</div></div><div class="r w"><div class="c0" style="width:379px"><u style="width:92px"><s class="ev" style="left:41px"></s><s class="clk" style="left:67px"></s></u><b style="letter-spacing:-.17px">Core Effective Clocks</b></div><div class="v" style="width:159px;">61.5 MHz</div><div class="v" style="width:159px;letter-spacing:.09px">0.9 MHz</div><div class="v" style="width:159px;letter-spacing:-.04px">1,878.3 MHz</div><div class="v" style="width:159px;">68.9 MHz</div></div><div class="r g"><div class="c0" style="width:379px"><u style="width:92px"><s class="clk" style="left:67px"></s></u><b style="">P-core 0 T0 Effective Clock</b></div><div class="v" style="width:159px;">29.1 MHz</div><div class="v" style="width:159px;letter-spacing:.09px">6.4 MHz</div><div class="v" style="width:159px;letter-spacing:-.06px">349.4 MHz</div><div class="v" style="width:159px;">56.1 MHz</div></div><div class="r w"><div class="c0" style="width:379px"><u style="width:92px"><s class="clk" style="left:67px"></s></u><b style="">P-core 0 T1 Effective Clock</b></div><div class="v" style="width:159px;">11.8 MHz</div><div class="v" style="width:159px;letter-spacing:.09px">4.4 MHz</div><div class="v" style="width:159px;letter-spacing:-.06px">299.7 MHz</div><div class="v" style="width:159px;">41.6 MHz</div></div><div class="r g"><div class="c0" style="width:379px"><u style="width:92px"><s class="clk" style="left:67px"></s></u><b style="">P-core 1 T0 Effective Clock</b></div><div class="v" style="width:159px;">10.5 MHz</div><div class="v" style="width:159px;letter-spacing:.09px">6.7 MHz</div><div class="v" style="width:159px;letter-spacing:-.06px">564.3 MHz</div><div class="v" style="width:159px;">64.3 MHz</div></div><div class="r w"><div class="c0" style="width:379px"><u style="width:92px"><s class="clk" style="left:67px"></s></u><b style="">P-core 1 T1 Effective Clock</b></div><div class="v" style="width:159px;letter-spacing:-.06px">271.9 MHz</div><div class="v" style="width:159px;letter-spacing:.09px">3.5 MHz</div><div class="v" style="width:159px;letter-spacing:-.06px">282.0 MHz</div><div class="v" style="width:159px;">40.0 MHz</div></div><div class="r g"><div class="c0" style="width:379px"><u style="width:92px"><s class="clk" style="left:67px"></s></u><b style="">P-core 2 T0 Effective Clock</b></div><div class="v" style="width:159px;letter-spacing:-.06px">344.3 MHz</div><div class="v" style="width:159px;letter-spacing:.09px">7.6 MHz</div><div class="v" style="width:159px;letter-spacing:-.04px">1,878.3 MHz</div><div class="v" style="width:159px;letter-spacing:-.06px">366.6 MHz</div></div><div class="r w"><div class="c0" style="width:379px"><u style="width:92px"><s class="clk" style="left:67px"></s></u><b style="">P-core 2 T1 Effective Clock</b></div><div class="v" style="width:159px;letter-spacing:.09px">9.4 MHz</div><div class="v" style="width:159px;letter-spacing:.09px">2.0 MHz</div><div class="v" style="width:159px;letter-spacing:-.06px">822.3 MHz</div><div class="v" style="width:159px;letter-spacing:-.06px">120.5 MHz</div></div><div class="r g"><div class="c0" style="width:379px"><u style="width:92px"><s class="clk" style="left:67px"></s></u><b style="">P-core 3 T0 Effective Clock</b></div><div class="v" style="width:159px;">10.1 MHz</div><div class="v" style="width:159px;letter-spacing:.09px">6.2 MHz</div><div class="v" style="width:159px;letter-spacing:-.04px">1,290.2 MHz</div><div class="v" style="width:159px;letter-spacing:-.06px">322.4 MHz</div></div><div class="r w"><div class="c0" style="width:379px"><u style="width:92px"><s class="clk" style="left:67px"></s></u><b style="">P-core 3 T1 Effective Clock</b></div><div class="v" style="width:159px;letter-spacing:-.06px">223.4 MHz</div><div class="v" style="width:159px;letter-spacing:.09px">2.1 MHz</div><div class="v" style="width:159px;letter-spacing:-.06px">551.2 MHz</div><div class="v" style="width:159px;letter-spacing:-.06px">102.2 MHz</div></div><div class="r g"><div class="c0" style="width:379px"><u style="width:92px"><s class="clk" style="left:67px"></s></u><b style="">P-core 4 T0 Effective Clock</b></div><div class="v" style="width:159px;">86.5 MHz</div><div class="v" style="width:159px;letter-spacing:.09px">4.4 MHz</div><div class="v" style="width:159px;letter-spacing:-.06px">469.4 MHz</div><div class="v" style="width:159px;">43.7 MHz</div></div><div class="r w"><div class="c0" style="width:379px"><u style="width:92px"><s class="clk" style="left:67px"></s></u><b style="">P-core 4 T1 Effective Clock</b></div><div class="v" style="width:159px;">31.7 MHz</div><div class="v" style="width:159px;letter-spacing:.09px">2.6 MHz</div><div class="v" style="width:159px;letter-spacing:-.06px">232.2 MHz</div><div class="v" style="width:159px;">28.0 MHz</div></div><div class="r g"><div class="c0" style="width:379px"><u style="width:92px"><s class="clk" style="left:67px"></s></u><b style="">P-core 5 T0 Effective Clock</b></div><div class="v" style="width:159px;">45.6 MHz</div><div class="v" style="width:159px;letter-spacing:.09px">2.0 MHz</div><div class="v" style="width:159px;letter-spacing:-.06px">364.5 MHz</div><div class="v" style="width:159px;">39.6 MHz</div></div><div class="r w"><div class="c0" style="width:379px"><u style="width:92px"><s class="clk" style="left:67px"></s></u><b style="">P-core 5 T1 Effective Clock</b></div><div class="v" style="width:159px;letter-spacing:.09px">8.3 MHz</div><div class="v" style="width:159px;letter-spacing:.09px">0.9 MHz</div><div class="v" style="width:159px;letter-spacing:-.06px">197.0 MHz</div><div class="v" style="width:159px;">23.4 MHz</div></div><div class="r g"><div class="c0" style="width:379px"><u style="width:92px"><s class="clk" style="left:67px"></s></u><b style="">E-core 6 T0 Effective Clock</b></div><div class="v" style="width:159px;">12.4 MHz</div><div class="v" style="width:159px;letter-spacing:.09px">3.4 MHz</div><div class="v" style="width:159px;letter-spacing:-.06px">138.8 MHz</div><div class="v" style="width:159px;">17.9 MHz</div></div><div class="r w"><div class="c0" style="width:379px"><u style="width:92px"><s class="clk" style="left:67px"></s></u><b style="">E-core 7 T0 Effective Clock</b></div><div class="v" style="width:159px;">40.8 MHz</div><div class="v" style="width:159px;letter-spacing:.09px">3.7 MHz</div><div class="v" style="width:159px;letter-spacing:-.06px">122.1 MHz</div><div class="v" style="width:159px;">23.9 MHz</div></div><div class="r g"><div class="c0" style="width:379px"><u style="width:92px"><s class="clk" style="left:67px"></s></u><b style="">E-core 8 T0 Effective Clock</b></div><div class="v" style="width:159px;letter-spacing:.09px">6.5 MHz</div><div class="v" style="width:159px;letter-spacing:.09px">3.8 MHz</div><div class="v" style="width:159px;letter-spacing:-.06px">743.5 MHz</div><div class="v" style="width:159px;">16.5 MHz</div></div><div class="r w"><div class="c0" style="width:379px"><u style="width:92px"><s class="clk" style="left:67px"></s></u><b style="">E-core 9 T0 Effective Clock</b></div><div class="v" style="width:159px;">11.9 MHz</div><div class="v" style="width:159px;letter-spacing:.09px">3.5 MHz</div><div class="v" style="width:159px;letter-spacing:-.06px">137.6 MHz</div><div class="v" style="width:159px;">15.7 MHz</div></div><div class="r g"><div class="c0" style="width:379px"><u style="width:92px"><s class="clk" style="left:67px"></s></u><b style="">E-core 10 T0 Effective Clock</b></div><div class="v" style="width:159px;letter-spacing:.09px">7.6 MHz</div><div class="v" style="width:159px;letter-spacing:.09px">4.2 MHz</div><div class="v" style="width:159px;letter-spacing:-.06px">186.6 MHz</div><div class="v" style="width:159px;">11.7 MHz</div></div><div class="r w"><div class="c0" style="width:379px"><u style="width:92px"><s class="clk" style="left:67px"></s></u><b style="">E-core 11 T0 Effective Clock</b></div><div class="v" style="width:159px;letter-spacing:.09px">6.4 MHz</div><div class="v" style="width:159px;letter-spacing:.09px">4.2 MHz</div><div class="v" style="width:159px;letter-spacing:-.06px">224.3 MHz</div><div class="v" style="width:159px;">14.2 MHz</div></div><div class="r g"><div class="c0" style="width:379px"><u style="width:92px"><s class="clk" style="left:67px"></s></u><b style="">E-core 12 T0 Effective Clock</b></div><div class="v" style="width:159px;">24.5 MHz</div><div class="v" style="width:159px;letter-spacing:.09px">3.8 MHz</div><div class="v" style="width:159px;letter-spacing:-.06px">138.1 MHz</div><div class="v" style="width:159px;">13.9 MHz</div></div><div class="r w"><div class="c0" style="width:379px"><u style="width:92px"><s class="clk" style="left:67px"></s></u><b style="">E-core 13 T0 Effective Clock</b></div><div class="v" style="width:159px;">38.1 MHz</div><div class="v" style="width:159px;letter-spacing:.09px">4.3 MHz</div><div class="v" style="width:159px;letter-spacing:-.06px">137.1 MHz</div><div class="v" style="width:159px;">15.5 MHz</div></div><div class="r g"><div class="c0" style="width:379px"><u style="width:64px"><s class="clk" style="left:39px"></s></u><b style="letter-spacing:-.12px">Average Effective Clock</b></div><div class="v" style="width:159px;">72.1 MHz</div><div class="v" style="width:159px;">54.1 MHz</div><div class="v" style="width:159px;letter-spacing:-.06px">409.3 MHz</div><div class="v" style="width:159px;">82.6 MHz</div></div><div class="r w"><div class="c0" style="width:379px"><u style="width:64px"><s class="clk" style="left:39px"></s></u><b style="letter-spacing:.14px">Total CPU Usage</b></div><div class="v" style="width:159px;letter-spacing:.69px">4.6 %</div><div class="v" style="width:159px;letter-spacing:.69px">2.7 %</div><div class="v" style="width:159px;letter-spacing:.47px">10.2 %</div><div class="v" style="width:159px;letter-spacing:.69px">4.3 %</div></div><div class="r g"><div class="c0" style="width:379px"><u style="width:64px"></u><b></b></div><div class="v" style="width:159px"></div><div class="v" style="width:159px"></div><div class="v" style="width:159px"></div><div class="v" style="width:159px"></div></div><div class="r h"><div class="c0" style="width:379px"><u style="width:64px"><s class="ev" style="left:13px"></s><s class="chp" style="left:42.7px"></s></u><b style="letter-spacing:.33px">CPU [#0]: Intel Core i7-12700H: DTS</b></div><div class="v" style="width:159px"></div><div class="v" style="width:159px"></div><div class="v" style="width:159px"></div><div class="v" style="width:159px"></div></div><div class="r g"><div class="c0" style="width:379px"><u style="width:92px"><s class="ev" style="left:41px"></s><s class="thm" style="left:73.5px"></s></u><b style="letter-spacing:.20px">Core Temperatures</b></div><div class="v" style="width:159px;letter-spacing:-.08px">73 °C</div><div class="v" style="width:159px;letter-spacing:-.08px">49 °C</div><div class="v" style="width:159px;letter-spacing:-.08px">94 °C</div><div class="v" style="width:159px;letter-spacing:-.08px">69 °C</div></div><div class="r w"><div class="c0" style="width:379px"><u style="width:92px"><s class="thm" style="left:73.5px"></s></u><b style="letter-spacing:.19px">P-core 0</b></div><div class="v" style="width:159px;letter-spacing:-.08px">74 °C</div><div class="v" style="width:159px;letter-spacing:-.08px">50 °C</div><div class="v" style="width:159px;letter-spacing:-.08px">87 °C</div><div class="v" style="width:159px;letter-spacing:-.08px">70 °C</div></div><div class="r g"><div class="c0" style="width:379px"><u style="width:92px"><s class="thm" style="left:73.5px"></s></u><b style="letter-spacing:.19px">P-core 1</b></div><div class="v" style="width:159px;letter-spacing:-.08px">74 °C</div><div class="v" style="width:159px;letter-spacing:-.08px">51 °C</div><div class="v" style="width:159px;letter-spacing:-.08px">81 °C</div><div class="v" style="width:159px;letter-spacing:-.08px">69 °C</div></div><div class="r w"><div class="c0" style="width:379px"><u style="width:92px"><s class="thm" style="left:73.5px"></s></u><b style="letter-spacing:.19px">P-core 2</b></div><div class="v" style="width:159px;letter-spacing:-.08px">72 °C</div><div class="v" style="width:159px;letter-spacing:-.08px">49 °C</div><div class="v" style="width:159px;letter-spacing:-.08px">94 °C</div><div class="v" style="width:159px;letter-spacing:-.08px">69 °C</div></div><div class="r g"><div class="c0" style="width:379px"><u style="width:92px"><s class="thm" style="left:73.5px"></s></u><b style="letter-spacing:.19px">P-core 3</b></div><div class="v" style="width:159px;letter-spacing:-.08px">72 °C</div><div class="v" style="width:159px;letter-spacing:-.08px">50 °C</div><div class="v" style="width:159px;letter-spacing:-.08px">85 °C</div><div class="v" style="width:159px;letter-spacing:-.08px">70 °C</div></div><div class="r w"><div class="c0" style="width:379px"><u style="width:92px"><s class="thm" style="left:73.5px"></s></u><b style="letter-spacing:.19px">P-core 4</b></div><div class="v" style="width:159px;letter-spacing:-.08px">71 °C</div><div class="v" style="width:159px;letter-spacing:-.08px">49 °C</div><div class="v" style="width:159px;letter-spacing:-.08px">84 °C</div><div class="v" style="width:159px;letter-spacing:-.08px">69 °C</div></div><div class="r g"><div class="c0" style="width:379px"><u style="width:92px"><s class="thm" style="left:73.5px"></s></u><b style="letter-spacing:.19px">P-core 5</b></div><div class="v" style="width:159px;letter-spacing:-.08px">74 °C</div><div class="v" style="width:159px;letter-spacing:-.08px">51 °C</div><div class="v" style="width:159px;letter-spacing:-.08px">88 °C</div><div class="v" style="width:159px;letter-spacing:-.08px">70 °C</div></div><div class="r w"><div class="c0" style="width:379px"><u style="width:92px"><s class="thm" style="left:73.5px"></s></u><b style="letter-spacing:.20px">E-core 6</b></div><div class="v" style="width:159px;letter-spacing:-.08px">72 °C</div><div class="v" style="width:159px;letter-spacing:-.08px">50 °C</div><div class="v" style="width:159px;letter-spacing:-.08px">76 °C</div><div class="v" style="width:159px;letter-spacing:-.08px">68 °C</div></div><div class="r g"><div class="c0" style="width:379px"><u style="width:92px"><s class="thm" style="left:73.5px"></s></u><b style="letter-spacing:.20px">E-core 7</b></div><div class="v" style="width:159px;letter-spacing:-.08px">73 °C</div><div class="v" style="width:159px;letter-spacing:-.08px">51 °C</div><div class="v" style="width:159px;letter-spacing:-.08px">77 °C</div><div class="v" style="width:159px;letter-spacing:-.08px">68 °C</div></div><div class="r w"><div class="c0" style="width:379px"><u style="width:92px"><s class="thm" style="left:73.5px"></s></u><b style="letter-spacing:.20px">E-core 8</b></div><div class="v" style="width:159px;letter-spacing:-.08px">73 °C</div><div class="v" style="width:159px;letter-spacing:-.08px">51 °C</div><div class="v" style="width:159px;letter-spacing:-.08px">77 °C</div><div class="v" style="width:159px;letter-spacing:-.08px">68 °C</div></div><div class="r g"><div class="c0" style="width:379px"><u style="width:92px"><s class="thm" style="left:73.5px"></s></u><b style="letter-spacing:.20px">E-core 9</b></div><div class="v" style="width:159px;letter-spacing:-.08px">71 °C</div><div class="v" style="width:159px;letter-spacing:-.08px">51 °C</div><div class="v" style="width:159px;letter-spacing:-.08px">77 °C</div><div class="v" style="width:159px;letter-spacing:-.08px">68 °C</div></div><div class="r w"><div class="c0" style="width:379px"><u style="width:92px"><s class="thm" style="left:73.5px"></s></u><b style="letter-spacing:.11px">E-core 10</b></div><div class="v" style="width:159px;letter-spacing:-.08px">72 °C</div><div class="v" style="width:159px;letter-spacing:-.08px">49 °C</div><div class="v" style="width:159px;letter-spacing:-.08px">80 °C</div><div class="v" style="width:159px;letter-spacing:-.08px">69 °C</div></div><div class="r g"><div class="c0" style="width:379px"><u style="width:92px"><s class="thm" style="left:73.5px"></s></u><b style="letter-spacing:.11px">E-core 11</b></div><div class="v" style="width:159px;letter-spacing:-.08px">73 °C</div><div class="v" style="width:159px;letter-spacing:-.08px">49 °C</div><div class="v" style="width:159px;letter-spacing:-.08px">80 °C</div><div class="v" style="width:159px;letter-spacing:-.08px">69 °C</div></div><div class="r w"><div class="c0" style="width:379px"><u style="width:92px"><s class="thm" style="left:73.5px"></s></u><b style="letter-spacing:.11px">E-core 12</b></div><div class="v" style="width:159px;letter-spacing:-.08px">73 °C</div><div class="v" style="width:159px;letter-spacing:-.08px">49 °C</div><div class="v" style="width:159px;letter-spacing:-.08px">81 °C</div><div class="v" style="width:159px;letter-spacing:-.08px">69 °C</div></div><div class="r g"><div class="c0" style="width:379px"><u style="width:92px"><s class="thm" style="left:73.5px"></s></u><b style="letter-spacing:.11px">E-core 13</b></div><div class="v" style="width:159px;letter-spacing:-.08px">73 °C</div><div class="v" style="width:159px;letter-spacing:-.08px">50 °C</div><div class="v" style="width:159px;letter-spacing:-.08px">81 °C</div><div class="v" style="width:159px;letter-spacing:-.08px">69 °C</div></div><div class="r w"><div class="c0" style="width:379px"><u style="width:92px"><s class="er" style="left:37.4px"></s><s class="thm" style="left:73.5px"></s></u><b style="">Core Distance to TjMAX</b></div><div class="v" style="width:159px;letter-spacing:-.08px">27 °C</div><div class="v" style="width:159px;letter-spacing:.04px">6 °C</div><div class="v" style="width:159px;letter-spacing:-.08px">51 °C</div><div class="v" style="width:159px;letter-spacing:-.08px">31 °C</div></div><div class="r g"><div class="c0" style="width:379px"><u style="width:64px"><s class="thm" style="left:45.5px"></s></u><b style="letter-spacing:.20px">CPU Package Temperature</b></div><div class="v" style="width:159px;letter-spacing:-.08px">77 °C</div><div class="v" style="width:159px;letter-spacing:-.08px">56 °C</div><div class="v" style="width:159px;letter-spacing:-.08px">94 °C</div><div class="v" style="width:159px;letter-spacing:-.08px">74 °C</div></div><div class="r w"><div class="c0" style="width:379px"><u style="width:64px"><s class="thm" style="left:45.5px"></s></u><b style="letter-spacing:-.02px">Core Max</b></div><div class="v" style="width:159px;letter-spacing:-.08px">74 °C</div><div class="v" style="width:159px;letter-spacing:-.08px">51 °C</div><div class="v" style="width:159px;letter-spacing:-.08px">94 °C</div><div class="v" style="width:159px;letter-spacing:-.08px">71 °C</div></div><div class="r g"><div class="c0" style="width:379px"><u style="width:92px"><s class="ev" style="left:41px"></s><s class="clk" style="left:67px"></s></u><b style="letter-spacing:.07px">Core Thermal Throttling</b></div><div class="v red" style="width:159px;letter-spacing:.79px">Yes</div><div class="v" style="width:159px;letter-spacing:.18px">No</div><div class="v red" style="width:159px;letter-spacing:.79px">Yes</div><div class="v" style="width:159px;"></div></div><div class="r w"><div class="c0" style="width:379px"><u style="width:92px"><s class="clk" style="left:67px"></s></u><b style="letter-spacing:.14px">P-core 0 Thermal Throttling</b></div><div class="v" style="width:159px;letter-spacing:.18px">No</div><div class="v" style="width:159px;letter-spacing:.18px">No</div><div class="v red" style="width:159px;letter-spacing:.79px">Yes</div><div class="v" style="width:159px;"></div></div><div class="r g"><div class="c0" style="width:379px"><u style="width:92px"><s class="clk" style="left:67px"></s></u><b style="letter-spacing:.14px">P-core 1 Thermal Throttling</b></div><div class="v" style="width:159px;letter-spacing:.18px">No</div><div class="v" style="width:159px;letter-spacing:.18px">No</div><div class="v red" style="width:159px;letter-spacing:.79px">Yes</div><div class="v" style="width:159px;"></div></div><div class="r w"><div class="c0" style="width:379px"><u style="width:92px"><s class="clk" style="left:67px"></s></u><b style="letter-spacing:.14px">P-core 2 Thermal Throttling</b></div><div class="v red" style="width:159px;letter-spacing:.79px">Yes</div><div class="v" style="width:159px;letter-spacing:.18px">No</div><div class="v red" style="width:159px;letter-spacing:.79px">Yes</div><div class="v" style="width:159px;"></div></div><div class="r g"><div class="c0" style="width:379px"><u style="width:92px"><s class="clk" style="left:67px"></s></u><b style="letter-spacing:.14px">P-core 3 Thermal Throttling</b></div><div class="v red" style="width:159px;letter-spacing:.79px">Yes</div><div class="v" style="width:159px;letter-spacing:.18px">No</div><div class="v red" style="width:159px;letter-spacing:.79px">Yes</div><div class="v" style="width:159px;"></div></div><div class="r w"><div class="c0" style="width:379px"><u style="width:92px"><s class="clk" style="left:67px"></s></u><b style="letter-spacing:.14px">P-core 4 Thermal Throttling</b></div><div class="v" style="width:159px;letter-spacing:.18px">No</div><div class="v" style="width:159px;letter-spacing:.18px">No</div><div class="v red" style="width:159px;letter-spacing:.79px">Yes</div><div class="v" style="width:159px;"></div></div><div class="r g"><div class="c0" style="width:379px"><u style="width:92px"><s class="clk" style="left:67px"></s></u><b style="letter-spacing:.14px">P-core 5 Thermal Throttling</b></div><div class="v" style="width:159px;letter-spacing:.18px">No</div><div class="v" style="width:159px;letter-spacing:.18px">No</div><div class="v red" style="width:159px;letter-spacing:.79px">Yes</div><div class="v" style="width:159px;"></div></div><div class="r w"><div class="c0" style="width:379px"><u style="width:92px"><s class="clk" style="left:67px"></s></u><b style="letter-spacing:.14px">E-core 6 Thermal Throttling</b></div><div class="v" style="width:159px;letter-spacing:.18px">No</div><div class="v" style="width:159px;letter-spacing:.18px">No</div><div class="v" style="width:159px;letter-spacing:.18px">No</div><div class="v" style="width:159px;"></div></div><div class="r g"><div class="c0" style="width:379px"><u style="width:92px"><s class="clk" style="left:67px"></s></u><b style="letter-spacing:.14px">E-core 7 Thermal Throttling</b></div><div class="v" style="width:159px;letter-spacing:.18px">No</div><div class="v" style="width:159px;letter-spacing:.18px">No</div><div class="v" style="width:159px;letter-spacing:.18px">No</div><div class="v" style="width:159px;"></div></div><div class="r w"><div class="c0" style="width:379px"><u style="width:92px"><s class="clk" style="left:67px"></s></u><b style="letter-spacing:.14px">E-core 8 Thermal Throttling</b></div><div class="v" style="width:159px;letter-spacing:.18px">No</div><div class="v" style="width:159px;letter-spacing:.18px">No</div><div class="v" style="width:159px;letter-spacing:.18px">No</div><div class="v" style="width:159px;"></div></div><div class="r g"><div class="c0" style="width:379px"><u style="width:92px"><s class="clk" style="left:67px"></s></u><b style="letter-spacing:.14px">E-core 9 Thermal Throttling</b></div><div class="v" style="width:159px;letter-spacing:.18px">No</div><div class="v" style="width:159px;letter-spacing:.18px">No</div><div class="v" style="width:159px;letter-spacing:.18px">No</div><div class="v" style="width:159px;"></div></div><div class="r w"><div class="c0" style="width:379px"><u style="width:92px"><s class="clk" style="left:67px"></s></u><b style="letter-spacing:.11px">E-core 10 Thermal Throttling</b></div><div class="v" style="width:159px;letter-spacing:.18px">No</div><div class="v" style="width:159px;letter-spacing:.18px">No</div><div class="v" style="width:159px;letter-spacing:.18px">No</div><div class="v" style="width:159px;"></div></div><div class="r g"><div class="c0" style="width:379px"><u style="width:92px"><s class="clk" style="left:67px"></s></u><b style="letter-spacing:.11px">E-core 11 Thermal Throttling</b></div><div class="v" style="width:159px;letter-spacing:.18px">No</div><div class="v" style="width:159px;letter-spacing:.18px">No</div><div class="v" style="width:159px;letter-spacing:.18px">No</div><div class="v" style="width:159px;"></div></div><div class="r w"><div class="c0" style="width:379px"><u style="width:92px"><s class="clk" style="left:67px"></s></u><b style="letter-spacing:.11px">E-core 12 Thermal Throttling</b></div><div class="v" style="width:159px;letter-spacing:.18px">No</div><div class="v" style="width:159px;letter-spacing:.18px">No</div><div class="v" style="width:159px;letter-spacing:.18px">No</div><div class="v" style="width:159px;"></div></div><div class="r g"><div class="c0" style="width:379px"><u style="width:92px"><s class="clk" style="left:67px"></s></u><b style="letter-spacing:.11px">E-core 13 Thermal Throttling</b></div><div class="v" style="width:159px;letter-spacing:.18px">No</div><div class="v" style="width:159px;letter-spacing:.18px">No</div><div class="v" style="width:159px;letter-spacing:.18px">No</div><div class="v" style="width:159px;"></div></div><div class="r w"><div class="c0" style="width:379px"><u style="width:92px"><s class="ev" style="left:41px"></s><s class="clk" style="left:67px"></s></u><b style="letter-spacing:.07px">Core Critical Temperature</b></div><div class="v" style="width:159px;letter-spacing:.18px">No</div><div class="v" style="width:159px;letter-spacing:.18px">No</div><div class="v" style="width:159px;letter-spacing:.18px">No</div><div class="v" style="width:159px;"></div></div><div class="r g"><div class="c0" style="width:379px"><u style="width:92px"><s class="clk" style="left:67px"></s></u><b style="letter-spacing:.12px">P-core 0 Critical Temperature</b></div><div class="v" style="width:159px;letter-spacing:.18px">No</div><div class="v" style="width:159px;letter-spacing:.18px">No</div><div class="v" style="width:159px;letter-spacing:.18px">No</div><div class="v" style="width:159px;"></div></div><div class="r w"><div class="c0" style="width:379px"><u style="width:92px"><s class="clk" style="left:67px"></s></u><b style="letter-spacing:.12px">P-core 1 Critical Temperature</b></div><div class="v" style="width:159px;letter-spacing:.18px">No</div><div class="v" style="width:159px;letter-spacing:.18px">No</div><div class="v" style="width:159px;letter-spacing:.18px">No</div><div class="v" style="width:159px;"></div></div><div class="r g"><div class="c0" style="width:379px"><u style="width:92px"><s class="clk" style="left:67px"></s></u><b style="letter-spacing:.12px">P-core 2 Critical Temperature</b></div><div class="v" style="width:159px;letter-spacing:.18px">No</div><div class="v" style="width:159px;letter-spacing:.18px">No</div><div class="v" style="width:159px;letter-spacing:.18px">No</div><div class="v" style="width:159px;"></div></div><div class="r w"><div class="c0" style="width:379px"><u style="width:92px"><s class="clk" style="left:67px"></s></u><b style="letter-spacing:.12px">P-core 3 Critical Temperature</b></div><div class="v" style="width:159px;letter-spacing:.18px">No</div><div class="v" style="width:159px;letter-spacing:.18px">No</div><div class="v" style="width:159px;letter-spacing:.18px">No</div><div class="v" style="width:159px;"></div></div><div class="r g"><div class="c0" style="width:379px"><u style="width:92px"><s class="clk" style="left:67px"></s></u><b style="letter-spacing:.12px">P-core 4 Critical Temperature</b></div><div class="v" style="width:159px;letter-spacing:.18px">No</div><div class="v" style="width:159px;letter-spacing:.18px">No</div><div class="v" style="width:159px;letter-spacing:.18px">No</div><div class="v" style="width:159px;"></div></div></div></div><div id="sp"></div><div class="ls" id="l2"><div class="hd"><span style="left:7.5px;">Sensor</span><span style="right:481.5px;letter-spacing:.08px">Current</span><span style="right:322.5px;letter-spacing:-.02px">Minimum</span><span style="right:174.5px;letter-spacing:-.14px">Maximum</span><span style="right:14.5px;letter-spacing:-.04px">Average</span><i style="left:423px"></i><i style="left:557px"></i><i style="left:716px"></i><i style="left:864px"></i><i style="left:1024px"></i></div><div class="vg" style="left:424px"></div><div class="vg" style="left:558px"></div><div class="vg" style="left:717px"></div><div class="vg" style="left:865px"></div><div class="vg" style="left:1025px"></div><div class="rows"><div class="r w"><div class="c0" style="width:424px"><u style="width:91px"><s class="clk" style="left:66px"></s></u><b style="letter-spacing:.12px">P-core 5 Critical Temperature</b></div><div class="v" style="width:133px;letter-spacing:.18px">No</div><div class="v" style="width:158px;letter-spacing:.18px">No</div><div class="v" style="width:147px;letter-spacing:.18px">No</div><div class="v" style="width:159px;"></div></div><div class="r g"><div class="c0" style="width:424px"><u style="width:91px"><s class="clk" style="left:66px"></s></u><b style="letter-spacing:.13px">E-core 6 Critical Temperature</b></div><div class="v" style="width:133px;letter-spacing:.18px">No</div><div class="v" style="width:158px;letter-spacing:.18px">No</div><div class="v" style="width:147px;letter-spacing:.18px">No</div><div class="v" style="width:159px;"></div></div><div class="r w"><div class="c0" style="width:424px"><u style="width:91px"><s class="clk" style="left:66px"></s></u><b style="letter-spacing:.13px">E-core 7 Critical Temperature</b></div><div class="v" style="width:133px;letter-spacing:.18px">No</div><div class="v" style="width:158px;letter-spacing:.18px">No</div><div class="v" style="width:147px;letter-spacing:.18px">No</div><div class="v" style="width:159px;"></div></div><div class="r g"><div class="c0" style="width:424px"><u style="width:91px"><s class="clk" style="left:66px"></s></u><b style="letter-spacing:.13px">E-core 8 Critical Temperature</b></div><div class="v" style="width:133px;letter-spacing:.18px">No</div><div class="v" style="width:158px;letter-spacing:.18px">No</div><div class="v" style="width:147px;letter-spacing:.18px">No</div><div class="v" style="width:159px;"></div></div><div class="r w"><div class="c0" style="width:424px"><u style="width:91px"><s class="clk" style="left:66px"></s></u><b style="letter-spacing:.13px">E-core 9 Critical Temperature</b></div><div class="v" style="width:133px;letter-spacing:.18px">No</div><div class="v" style="width:158px;letter-spacing:.18px">No</div><div class="v" style="width:147px;letter-spacing:.18px">No</div><div class="v" style="width:159px;"></div></div><div class="r g"><div class="c0" style="width:424px"><u style="width:91px"><s class="clk" style="left:66px"></s></u><b style="letter-spacing:.10px">E-core 10 Critical Temperature</b></div><div class="v" style="width:133px;letter-spacing:.18px">No</div><div class="v" style="width:158px;letter-spacing:.18px">No</div><div class="v" style="width:147px;letter-spacing:.18px">No</div><div class="v" style="width:159px;"></div></div><div class="r w"><div class="c0" style="width:424px"><u style="width:91px"><s class="clk" style="left:66px"></s></u><b style="letter-spacing:.10px">E-core 11 Critical Temperature</b></div><div class="v" style="width:133px;letter-spacing:.18px">No</div><div class="v" style="width:158px;letter-spacing:.18px">No</div><div class="v" style="width:147px;letter-spacing:.18px">No</div><div class="v" style="width:159px;"></div></div><div class="r g"><div class="c0" style="width:424px"><u style="width:91px"><s class="clk" style="left:66px"></s></u><b style="letter-spacing:.10px">E-core 12 Critical Temperature</b></div><div class="v" style="width:133px;letter-spacing:.18px">No</div><div class="v" style="width:158px;letter-spacing:.18px">No</div><div class="v" style="width:147px;letter-spacing:.18px">No</div><div class="v" style="width:159px;"></div></div><div class="r w"><div class="c0" style="width:424px"><u style="width:91px"><s class="clk" style="left:66px"></s></u><b style="letter-spacing:.10px">E-core 13 Critical Temperature</b></div><div class="v" style="width:133px;letter-spacing:.18px">No</div><div class="v" style="width:158px;letter-spacing:.18px">No</div><div class="v" style="width:147px;letter-spacing:.18px">No</div><div class="v" style="width:159px;"></div></div><div class="r g"><div class="c0" style="width:424px"><u style="width:91px"><s class="er" style="left:36.4px"></s><s class="clk" style="left:66px"></s></u><b style="">Core Power Limit Exceeded</b></div><div class="v" style="width:133px;letter-spacing:.18px">No</div><div class="v" style="width:158px;letter-spacing:.18px">No</div><div class="v" style="width:147px;letter-spacing:.79px">Yes</div><div class="v" style="width:159px;"></div></div><div class="r w"><div class="c0" style="width:424px"><u style="width:63px"><s class="clk" style="left:38px"></s></u><b style="letter-spacing:.14px">Package/Ring Thermal Throttling</b></div><div class="v red" style="width:133px;letter-spacing:.79px">Yes</div><div class="v" style="width:158px;letter-spacing:.18px">No</div><div class="v red" style="width:147px;letter-spacing:.79px">Yes</div><div class="v" style="width:159px;"></div></div><div class="r g"><div class="c0" style="width:424px"><u style="width:63px"><s class="clk" style="left:38px"></s></u><b style="letter-spacing:.13px">Package/Ring Critical Temperature</b></div><div class="v" style="width:133px;letter-spacing:.18px">No</div><div class="v" style="width:158px;letter-spacing:.18px">No</div><div class="v" style="width:147px;letter-spacing:.18px">No</div><div class="v" style="width:159px;"></div></div><div class="r w"><div class="c0" style="width:424px"><u style="width:63px"><s class="clk" style="left:38px"></s></u><b style="letter-spacing:.08px">Package/Ring Power Limit Exceeded</b></div><div class="v" style="width:133px;letter-spacing:.18px">No</div><div class="v" style="width:158px;letter-spacing:.18px">No</div><div class="v" style="width:147px;letter-spacing:.79px">Yes</div><div class="v" style="width:159px;"></div></div><div class="r g"><div class="c0" style="width:424px"><u style="width:63px"></u><b></b></div><div class="v" style="width:133px"></div><div class="v" style="width:158px"></div><div class="v" style="width:147px"></div><div class="v" style="width:159px"></div></div><div class="r h"><div class="c0" style="width:424px"><u style="width:63px"><s class="ev" style="left:12px"></s><s class="chp" style="left:41.7px"></s></u><b style="letter-spacing:.25px">CPU [#0]: Intel Core i7-12700H: Enhanced</b></div><div class="v" style="width:133px"></div><div class="v" style="width:158px"></div><div class="v" style="width:147px"></div><div class="v" style="width:159px"></div></div><div class="r g"><div class="c0" style="width:424px"><u style="width:63px"><s class="thm" style="left:44.5px"></s></u><b style="letter-spacing:.20px">CPU Package Temperature</b></div><div class="v" style="width:133px;letter-spacing:-.08px">86 °C</div><div class="v" style="width:158px;letter-spacing:-.08px">61 °C</div><div class="v red" style="width:147px;letter-spacing:-.08px">97 °C</div><div class="v" style="width:159px;letter-spacing:-.08px">80 °C</div></div><div class="r w"><div class="c0" style="width:424px"><u style="width:63px"><s class="thm" style="left:44.5px"></s></u><b style="letter-spacing:.10px">CPU IA Cores</b></div><div class="v" style="width:133px;letter-spacing:-.08px">86 °C</div><div class="v" style="width:158px;letter-spacing:-.08px">56 °C</div><div class="v red" style="width:147px;letter-spacing:-.08px">97 °C</div><div class="v" style="width:159px;letter-spacing:-.08px">79 °C</div></div><div class="r g"><div class="c0" style="width:424px"><u style="width:63px"><s class="thm" style="left:44.5px"></s></u><b style="letter-spacing:.10px">CPU GT Cores (Graphics)</b></div><div class="v" style="width:133px;letter-spacing:-.08px">77 °C</div><div class="v" style="width:158px;letter-spacing:-.08px">56 °C</div><div class="v" style="width:147px;letter-spacing:-.08px">78 °C</div><div class="v" style="width:159px;letter-spacing:-.08px">73 °C</div></div><div class="r w"><div class="c0" style="width:424px"><u style="width:63px"><s class="blt" style="left:41px"></s></u><b style="letter-spacing:.09px">CPU Package Power</b></div><div class="v" style="width:133px;letter-spacing:-.05px">9.957 W</div><div class="v" style="width:158px;letter-spacing:-.05px">8.523 W</div><div class="v" style="width:147px;letter-spacing:-.12px">23.991 W</div><div class="v" style="width:159px;letter-spacing:-.12px">10.213 W</div></div><div class="r g"><div class="c0" style="width:424px"><u style="width:63px"><s class="blt" style="left:41px"></s></u><b style="letter-spacing:.20px">IA Cores Power</b></div><div class="v" style="width:133px;letter-spacing:-.05px">3.057 W</div><div class="v" style="width:158px;letter-spacing:-.05px">2.371 W</div><div class="v" style="width:147px;letter-spacing:-.12px">17.024 W</div><div class="v" style="width:159px;letter-spacing:-.05px">3.684 W</div></div><div class="r w"><div class="c0" style="width:424px"><u style="width:63px"><s class="blt" style="left:41px"></s></u><b style="letter-spacing:.19px">GT Cores Power</b></div><div class="v" style="width:133px;letter-spacing:-.05px">0.000 W</div><div class="v" style="width:158px;letter-spacing:-.05px">0.000 W</div><div class="v" style="width:147px;letter-spacing:-.05px">0.307 W</div><div class="v" style="width:159px;letter-spacing:-.05px">0.105 W</div></div><div class="r g"><div class="c0" style="width:424px"><u style="width:63px"><s class="blt" style="left:41px"></s></u><b style="letter-spacing:.14px">Total System Power</b></div><div class="v" style="width:133px;letter-spacing:-.12px">12.380 W</div><div class="v" style="width:158px;letter-spacing:-.12px">10.566 W</div><div class="v" style="width:147px;letter-spacing:-.12px">15.960 W</div><div class="v" style="width:159px;letter-spacing:-.12px">13.691 W</div></div><div class="r w"><div class="c0" style="width:424px"><u style="width:63px"><s class="blt" style="left:41px"></s></u><b style="">System Agent Power</b></div><div class="v" style="width:133px;letter-spacing:-.05px">6.200 W</div><div class="v" style="width:158px;letter-spacing:-.05px">5.340 W</div><div class="v" style="width:147px;letter-spacing:-.05px">6.205 W</div><div class="v" style="width:159px;letter-spacing:-.05px">5.758 W</div></div><div class="r g"><div class="c0" style="width:424px"><u style="width:63px"><s class="blt" style="left:41px"></s></u><b style="letter-spacing:.20px">Rest-of-Chip Power</b></div><div class="v" style="width:133px;letter-spacing:-.05px">0.211 W</div><div class="v" style="width:158px;letter-spacing:-.05px">0.168 W</div><div class="v" style="width:147px;letter-spacing:-.05px">0.279 W</div><div class="v" style="width:159px;letter-spacing:-.05px">0.201 W</div></div><div class="r w"><div class="c0" style="width:424px"><u style="width:63px"><s class="blt" style="left:41px"></s></u><b style="letter-spacing:-.07px">PL1 Power Limit</b></div><div class="v" style="width:133px;letter-spacing:-.05px">200.0 W</div><div class="v" style="width:158px;letter-spacing:-.05px">200.0 W</div><div class="v" style="width:147px;letter-spacing:-.05px">200.0 W</div><div class="v" style="width:159px;letter-spacing:-.05px">200.0 W</div></div><div class="r g"><div class="c0" style="width:424px"><u style="width:63px"><s class="blt" style="left:41px"></s></u><b style="letter-spacing:-.07px">PL2 Power Limit</b></div><div class="v" style="width:133px;letter-spacing:-.05px">200.0 W</div><div class="v" style="width:158px;letter-spacing:-.05px">200.0 W</div><div class="v" style="width:147px;letter-spacing:-.05px">200.0 W</div><div class="v" style="width:159px;letter-spacing:-.05px">200.0 W</div></div><div class="r w"><div class="c0" style="width:424px"><u style="width:63px"><s class="blt" style="left:41px"></s></u><b style="letter-spacing:.14px">PCH Power</b></div><div class="v" style="width:133px;letter-spacing:-.05px">0.084 W</div><div class="v" style="width:158px;letter-spacing:-.05px">0.083 W</div><div class="v" style="width:147px;letter-spacing:-.05px">0.085 W</div><div class="v" style="width:159px;letter-spacing:-.05px">0.084 W</div></div><div class="r g"><div class="c0" style="width:424px"><u style="width:63px"><s class="clk" style="left:38px"></s></u><b style="letter-spacing:-.18px">GPU Clock</b></div><div class="v" style="width:133px;letter-spacing:-.06px">600.0 MHz</div><div class="v" style="width:158px;letter-spacing:-.06px">450.0 MHz</div><div class="v" style="width:147px;letter-spacing:-.06px">600.0 MHz</div><div class="v" style="width:159px;letter-spacing:-.06px">458.0 MHz</div></div><div class="r w"><div class="c0" style="width:424px"><u style="width:63px"><s class="clk" style="left:38px"></s></u><b style="">GPU D3D Usage</b></div><div class="v" style="width:133px;letter-spacing:.69px">0.0 %</div><div class="v" style="width:158px;letter-spacing:.69px">0.0 %</div><div class="v" style="width:147px;letter-spacing:.69px">0.0 %</div><div class="v" style="width:159px;letter-spacing:.69px">0.0 %</div></div><div class="r g"><div class="c0" style="width:424px"><u style="width:63px"><s class="clk" style="left:38px"></s></u><b style="">GPU D3D Memory Dynamic</b></div><div class="v" style="width:133px;letter-spacing:-.14px">269 MB</div><div class="v" style="width:158px;letter-spacing:-.14px">269 MB</div><div class="v" style="width:147px;letter-spacing:-.14px">275 MB</div><div class="v" style="width:159px;letter-spacing:-.14px">269 MB</div></div><div class="r w"><div class="c0" style="width:424px"><u style="width:63px"><s class="clk" style="left:38px"></s></u><b style="letter-spacing:.05px">Current cTDP Level</b></div><div class="v" style="width:133px;letter-spacing:-.59px">0 </div><div class="v" style="width:158px;letter-spacing:-.59px">0 </div><div class="v" style="width:147px;letter-spacing:-.59px">0 </div><div class="v" style="width:159px;letter-spacing:-.59px">0 </div></div><div class="r g"><div class="c0" style="width:424px"><u style="width:63px"></u><b></b></div><div class="v" style="width:133px"></div><div class="v" style="width:158px"></div><div class="v" style="width:147px"></div><div class="v" style="width:159px"></div></div><div class="r h"><div class="c0" style="width:424px"><u style="width:63px"><s class="ev" style="left:12px"></s><s class="chp" style="left:41.7px"></s></u><b style="letter-spacing:.10px">Memory Timings</b></div><div class="v" style="width:133px"></div><div class="v" style="width:158px"></div><div class="v" style="width:147px"></div><div class="v" style="width:159px"></div></div><div class="r g"><div class="c0" style="width:424px"><u style="width:63px"><s class="clk" style="left:38px"></s></u><b style="letter-spacing:-.18px">Memory Clock</b></div><div class="v" style="width:133px;letter-spacing:-.04px">1,596.1 MHz</div><div class="v" style="width:158px;letter-spacing:-.04px">1,596.1 MHz</div><div class="v" style="width:147px;letter-spacing:-.04px">1,596.5 MHz</div><div class="v" style="width:159px;letter-spacing:-.04px">1,596.1 MHz</div></div><div class="r w"><div class="c0" style="width:424px"><u style="width:63px"></u><b></b></div><div class="v" style="width:133px"></div><div class="v" style="width:158px"></div><div class="v" style="width:147px"></div><div class="v" style="width:159px"></div></div><div class="r h"><div class="c0" style="width:424px"><u style="width:63px"><s class="ev" style="left:12px"></s><s class="chp" style="left:41.7px"></s></u><b style="letter-spacing:.28px">CPU [#0]: Intel Core i7-12700H: Performa...</b></div><div class="v" style="width:133px"></div><div class="v" style="width:158px"></div><div class="v" style="width:147px"></div><div class="v" style="width:159px"></div></div><div class="r w"><div class="c0" style="width:424px"><u style="width:91px"><s class="er" style="left:36.4px"></s><s class="clk" style="left:66px"></s></u><b style="letter-spacing:.04px">IA Limit Reasons</b></div><div class="v" style="width:133px;letter-spacing:.79px">Yes</div><div class="v" style="width:158px;letter-spacing:.18px">No</div><div class="v" style="width:147px;letter-spacing:.79px">Yes</div><div class="v" style="width:159px;"></div></div><div class="r g"><div class="c0" style="width:424px"><u style="width:91px"><s class="er" style="left:36.4px"></s><s class="clk" style="left:66px"></s></u><b style="letter-spacing:.03px">GT Limit Reasons</b></div><div class="v" style="width:133px;letter-spacing:.18px">No</div><div class="v" style="width:158px;letter-spacing:.18px">No</div><div class="v" style="width:147px;letter-spacing:.79px">Yes</div><div class="v" style="width:159px;"></div></div><div class="r g"><div class="c0" style="width:424px"><u style="width:91px"><s class="er" style="left:36.4px"></s><s class="clk" style="left:66px"></s></u><b style="letter-spacing:-.02px">Ring Limit Reasons</b></div><div class="v" style="width:133px;letter-spacing:.79px">Yes</div><div class="v" style="width:158px;letter-spacing:.18px">No</div><div class="v" style="width:147px;letter-spacing:.79px">Yes</div><div class="v" style="width:159px;"></div></div><div class="r w"><div class="c0" style="width:424px"><u style="width:63px"></u><b></b></div><div class="v" style="width:133px"></div><div class="v" style="width:158px"></div><div class="v" style="width:147px"></div><div class="v" style="width:159px"></div></div><div class="r h"><div class="c0" style="width:424px"><u style="width:63px"><s class="ev" style="left:12px"></s><s class="chp" style="left:41.7px"></s></u><b style="letter-spacing:.33px">S.M.A.R.T.: SAMSUNG MZVL4512HBLU-00...</b></div><div class="v" style="width:133px"></div><div class="v" style="width:158px"></div><div class="v" style="width:147px"></div><div class="v" style="width:159px"></div></div><div class="r w"><div class="c0" style="width:424px"><u style="width:63px"><s class="thm" style="left:44.5px"></s></u><b style="letter-spacing:.19px">Drive Temperature</b></div><div class="v" style="width:133px;letter-spacing:-.08px">38 °C</div><div class="v" style="width:158px;letter-spacing:-.08px">35 °C</div><div class="v" style="width:147px;letter-spacing:-.08px">38 °C</div><div class="v" style="width:159px;letter-spacing:-.08px">37 °C</div></div><div class="r g"><div class="c0" style="width:424px"><u style="width:63px"></u><b></b></div><div class="v" style="width:133px"></div><div class="v" style="width:158px"></div><div class="v" style="width:147px"></div><div class="v" style="width:159px"></div></div><div class="r h"><div class="c0" style="width:424px"><u style="width:63px"><s class="ev" style="left:12px"></s><s class="chp" style="left:41.7px"></s></u><b style="letter-spacing:.35px">GPU [#1]: NVIDIA GeForce RTX 3060 Lapt...</b></div><div class="v" style="width:133px"></div><div class="v" style="width:158px"></div><div class="v" style="width:147px"></div><div class="v" style="width:159px"></div></div><div class="r g"><div class="c0" style="width:424px"><u style="width:63px"><s class="thm" style="left:44.5px"></s></u><b style="letter-spacing:.30px">GPU Temperature</b></div><div class="v" style="width:133px;letter-spacing:-.04px">83.3 °C</div><div class="v" style="width:158px;letter-spacing:-.04px">63.3 °C</div><div class="v" style="width:147px;letter-spacing:-.04px">85.4 °C</div><div class="v" style="width:159px;letter-spacing:-.04px">81.0 °C</div></div><div class="r w"><div class="c0" style="width:424px"><u style="width:63px"><s class="thm" style="left:44.5px"></s></u><b style="letter-spacing:.24px">GPU Hot Spot Temperature</b></div><div class="v" style="width:133px;letter-spacing:-.04px">87.3 °C</div><div class="v" style="width:158px;letter-spacing:-.04px">67.1 °C</div><div class="v" style="width:147px;letter-spacing:-.04px">89.6 °C</div><div class="v" style="width:159px;letter-spacing:-.04px">85.1 °C</div></div><div class="r g"><div class="c0" style="width:424px"><u style="width:63px"><s class="thm" style="left:44.5px"></s></u><b style="letter-spacing:-.03px">GPU Thermal Limit</b></div><div class="v" style="width:133px;letter-spacing:-.04px">87.0 °C</div><div class="v" style="width:158px;letter-spacing:-.04px">87.0 °C</div><div class="v" style="width:147px;letter-spacing:-.04px">87.0 °C</div><div class="v" style="width:159px;letter-spacing:-.04px">87.0 °C</div></div><div class="r w"><div class="c0" style="width:424px"><u style="width:63px"><s class="blt" style="left:41px"></s></u><b style="letter-spacing:.03px">GPU Core Voltage</b></div><div class="v" style="width:133px;letter-spacing:-.19px">0.900 V</div><div class="v" style="width:158px;letter-spacing:-.19px">0.731 V</div><div class="v" style="width:147px;letter-spacing:-.19px">1.006 V</div><div class="v" style="width:159px;letter-spacing:-.19px">0.802 V</div></div><div class="r g"><div class="c0" style="width:424px"><u style="width:91px"><s class="er" style="left:36.4px"></s><s class="blt" style="left:69px"></s></u><b style="">GPU Rail Voltages</b></div><div class="v" style="width:133px;"></div><div class="v" style="width:158px;letter-spacing:-.24px">19.989 V</div><div class="v" style="width:147px;letter-spacing:-.24px">20.257 V</div><div class="v" style="width:159px;"></div></div><div class="r w"><div class="c0" style="width:424px"><u style="width:63px"><s class="blt" style="left:41px"></s></u><b style="letter-spacing:.15px">GPU Power</b></div><div class="v" style="width:133px;letter-spacing:-.12px">83.967 W</div><div class="v" style="width:158px;letter-spacing:-.12px">77.700 W</div><div class="v" style="width:147px;letter-spacing:-.17px">105.324 W</div><div class="v" style="width:159px;letter-spacing:-.17px">100.968 W</div></div><div class="r g"><div class="c0" style="width:424px"><u style="width:91px"><s class="er" style="left:36.4px"></s><s class="blt" style="left:69px"></s></u><b style="letter-spacing:.05px">GPU Rail Powers</b></div><div class="v" style="width:133px;"></div><div class="v" style="width:158px;letter-spacing:-.05px">0.000 W</div><div class="v" style="width:147px;letter-spacing:-.17px">105.244 W</div><div class="v" style="width:159px;"></div></div><div class="r w"><div class="c0" style="width:424px"><u style="width:63px"><s class="clk" style="left:38px"></s></u><b style="letter-spacing:-.18px">GPU Clock</b></div><div class="v" style="width:133px;letter-spacing:-.04px">1,770.0 MHz</div><div class="v" style="width:158px;letter-spacing:-.04px">1,417.0 MHz</div><div class="v" style="width:147px;letter-spacing:-.04px">1,897.0 MHz</div><div class="v" style="width:159px;letter-spacing:-.04px">1,572.7 MHz</div></div><div class="r g"><div class="c0" style="width:424px"><u style="width:63px"><s class="clk" style="left:38px"></s></u><b style="letter-spacing:-.10px">GPU Memory Clock</b></div><div class="v" style="width:133px;letter-spacing:-.04px">1,750.2 MHz</div><div class="v" style="width:158px;letter-spacing:-.04px">1,500.2 MHz</div><div class="v" style="width:147px;letter-spacing:-.04px">1,750.2 MHz</div><div class="v" style="width:159px;letter-spacing:-.04px">1,598.1 MHz</div></div><div class="r w"><div class="c0" style="width:424px"><u style="width:63px"><s class="clk" style="left:38px"></s></u><b style="letter-spacing:-.10px">GPU Video Clock</b></div><div class="v" style="width:133px;letter-spacing:-.04px">1,552.0 MHz</div><div class="v" style="width:158px;letter-spacing:-.04px">1,245.0 MHz</div><div class="v" style="width:147px;letter-spacing:-.04px">1,665.0 MHz</div><div class="v" style="width:159px;letter-spacing:-.04px">1,381.9 MHz</div></div><div class="r g"><div class="c0" style="width:424px"><u style="width:63px"><s class="clk" style="left:38px"></s></u><b style="letter-spacing:-.13px">GPU Effective Clock</b></div><div class="v" style="width:133px;letter-spacing:-.04px">1,667.2 MHz</div><div class="v" style="width:158px;letter-spacing:-.04px">1,226.7 MHz</div><div class="v" style="width:147px;letter-spacing:-.04px">1,864.7 MHz</div><div class="v" style="width:159px;letter-spacing:-.04px">1,567.6 MHz</div></div><div class="r w"><div class="c0" style="width:424px"><u style="width:91px"><s class="ev" style="left:40px"></s><s class="clk" style="left:66px"></s></u><b style="letter-spacing:-.04px">GPU Performance Limiters</b></div><div class="v" style="width:133px;letter-spacing:.79px">Yes</div><div class="v" style="width:158px;letter-spacing:.18px">No</div><div class="v" style="width:147px;letter-spacing:.79px">Yes</div><div class="v" style="width:159px;letter-spacing:.79px">Yes</div></div><div class="r g"><div class="c0" style="width:424px"><u style="width:91px"><s class="clk" style="left:66px"></s></u><b style="letter-spacing:.09px">Performance Limit - Power</b></div><div class="v" style="width:133px;letter-spacing:.18px">No</div><div class="v" style="width:158px;letter-spacing:.18px">No</div><div class="v" style="width:147px;letter-spacing:.79px">Yes</div><div class="v" style="width:159px;letter-spacing:.79px">Yes</div></div><div class="r w"><div class="c0" style="width:424px"><u style="width:91px"><s class="clk" style="left:66px"></s></u><b style="letter-spacing:.07px">Performance Limit - Thermal</b></div><div class="v" style="width:133px;letter-spacing:.18px">No</div><div class="v" style="width:158px;letter-spacing:.18px">No</div><div class="v" style="width:147px;letter-spacing:.18px">No</div><div class="v" style="width:159px;letter-spacing:.18px">No</div></div><div class="r g"><div class="c0" style="width:424px"><u style="width:91px"><s class="clk" style="left:66px"></s></u><b style="letter-spacing:-.03px">Performance Limit - Reliability Voltage</b></div><div class="v" style="width:133px;letter-spacing:.18px">No</div><div class="v" style="width:158px;letter-spacing:.18px">No</div><div class="v" style="width:147px;letter-spacing:.18px">No</div><div class="v" style="width:159px;letter-spacing:.18px">No</div></div><div class="r w"><div class="c0" style="width:424px"><u style="width:91px"><s class="clk" style="left:66px"></s></u><b style="letter-spacing:.17px">Performance Limit - Max Operating V...</b></div><div class="v" style="width:133px;letter-spacing:.18px">No</div><div class="v" style="width:158px;letter-spacing:.18px">No</div><div class="v" style="width:147px;letter-spacing:.18px">No</div><div class="v" style="width:159px;letter-spacing:.18px">No</div></div><div class="r g"><div class="c0" style="width:424px"><u style="width:91px"><s class="clk" style="left:66px"></s></u><b style="letter-spacing:-.09px">Performance Limit - Utilization</b></div><div class="v" style="width:133px;letter-spacing:.79px">Yes</div><div class="v" style="width:158px;letter-spacing:.18px">No</div><div class="v" style="width:147px;letter-spacing:.79px">Yes</div><div class="v" style="width:159px;letter-spacing:.79px">Yes</div></div><div class="r w"><div class="c0" style="width:424px"><u style="width:91px"><s class="clk" style="left:66px"></s></u><b style="letter-spacing:.08px">Performance Limit - SLI GPUBoost Sync</b></div><div class="v" style="width:133px;letter-spacing:.18px">No</div><div class="v" style="width:158px;letter-spacing:.18px">No</div><div class="v" style="width:147px;letter-spacing:.18px">No</div><div class="v" style="width:159px;letter-spacing:.18px">No</div></div><div class="r g"><div class="c0" style="width:424px"><u style="width:63px"><s class="clk" style="left:38px"></s></u><b style="letter-spacing:-.09px">GPU Memory Allocated</b></div><div class="v" style="width:133px;letter-spacing:-.09px">1,206 MB</div><div class="v" style="width:158px;letter-spacing:-.09px">1,188 MB</div><div class="v" style="width:147px;letter-spacing:-.09px">1,362 MB</div><div class="v" style="width:159px;letter-spacing:-.09px">1,194 MB</div></div><div class="r w"><div class="c0" style="width:424px"><u style="width:63px"><s class="clk" style="left:38px"></s></u><b style="">GPU D3D Memory Dedicated</b></div><div class="v" style="width:133px;letter-spacing:-.09px">1,091 MB</div><div class="v" style="width:158px;letter-spacing:-.09px">1,073 MB</div><div class="v" style="width:147px;letter-spacing:-.09px">1,246 MB</div><div class="v" style="width:159px;letter-spacing:-.09px">1,079 MB</div></div><div class="r g"><div class="c0" style="width:424px"><u style="width:63px"><s class="clk" style="left:38px"></s></u><b style="">GPU D3D Memory Dynamic</b></div><div class="v" style="width:133px;letter-spacing:-.14px">100 MB</div><div class="v" style="width:158px;letter-spacing:-.05px">92 MB</div><div class="v" style="width:147px;letter-spacing:-.14px">117 MB</div><div class="v" style="width:159px;letter-spacing:-.14px">100 MB</div></div><div class="r w"><div class="c0" style="width:424px"><u style="width:63px"><s class="clk" style="left:38px"></s></u><b style="letter-spacing:.16px">PCIe Link Speed</b></div><div class="v" style="width:133px;letter-spacing:.22px">16.0 GT/s</div><div class="v" style="width:158px;letter-spacing:.22px">16.0 GT/s</div><div class="v" style="width:147px;letter-spacing:.22px">16.0 GT/s</div><div class="v" style="width:159px;letter-spacing:.22px">16.0 GT/s</div></div><div class="r w"></div><div class="r w"></div></div></div></div><div class="bt" style="left:2px;top:2073px;width:71px"><svg width="69" height="62"><g fill="#3b97e3" stroke="#3089d6" stroke-width=".7"><path d="M7.6 31.7l12-12v6.5h11v11h-11v6.5z"/><path d="M59.3 31.7l-12-12v6.5h-11v11h11v6.5z"/></g></svg></div><div class="bt" style="left:75px;top:2073px;width:71px"><svg width="69" height="62"><g fill="#3b97e3" stroke="#3089d6" stroke-width=".7"><path d="M32.8 31.7l-12-12v6.5h-11v11h11v6.5z"/><path d="M35.4 31.7l12-12v6.5h11v11h-11v6.5z"/></g></svg></div><div class="bt" style="left:1481px;top:2073px;width:71px"><svg width="69" height="62"><defs><linearGradient id="mb" x1="0" y1="0" x2="0" y2="1"><stop offset="0" stop-color="#e6eaff"/><stop offset=".45" stop-color="#8f9bf6"/><stop offset="1" stop-color="#1b22d6"/></linearGradient><radialGradient id="mg" cx=".4" cy=".35" r=".75"><stop offset="0" stop-color="#eef3fc" stop-opacity=".93"/><stop offset="1" stop-color="#b4c3ea" stop-opacity=".8"/></radialGradient></defs><ellipse cx="39" cy="47.5" rx="13" ry="3.6" fill="#000" opacity=".07"/><ellipse cx="34.2" cy="46" rx="11.6" ry="4.2" fill="#dcdcdc"/><path d="M29 38h10l2 7H28z" fill="#e6e6e6"/><path d="M17.1 8.8l35.7 4.2-3.9 28.8-28.7-6.2z" fill="#ececec" stroke="#c9c9c9" stroke-width=".7"/><path d="M18.6 10.3l14 1.7 3.1 25.9-14.7-3.1z" fill="#0a0ad2"/><path d="M32.6 12l18.3 2.2-3.5 25.2-11.7-1.5z" fill="url(#mb)"/><path d="M28.3 40.2l10.9 13.2" stroke="#8a5726" stroke-width="3.6" stroke-linecap="round"/><circle cx="19.8" cy="29.7" r="11" fill="url(#mg)" stroke="#a3a3a3" stroke-width="1.7"/><path d="M13 27h13v8H13z" fill="#8d9be8" opacity=".35"/></svg></div><div class="bt" style="left:1568px;top:2073px;width:71px"><svg width="69" height="62"><defs><linearGradient id="nb" x1="0" y1="0" x2="1" y2="1"><stop offset="0" stop-color="#57b4f2"/><stop offset=".5" stop-color="#1c88dc"/><stop offset="1" stop-color="#2f9be6"/></linearGradient></defs><path d="M33 16.9h17v12" fill="none" stroke="#7b868c" stroke-width="1.3"/><g transform="translate(6.9,4.9)"><ellipse cx="14" cy="26.8" rx="9" ry="3.5" fill="#9da3a6"/><ellipse cx="14" cy="26" rx="8" ry="2.6" fill="#c9cdcf"/><path d="M11 19h6l1.5 6.5h-9z" fill="#aeb4b7"/><path d="M2 0l25.6 2.7-3.1 20.6L0 18.6z" fill="#5e6b74"/><path d="M3.6 1.7l22.2 2.4-2.6 17.2L1.9 17.3z" fill="url(#nb)"/><path d="M3.6 1.7l22.2 2.4-.5 3.3C17 5.5 7 8 2.6 13.5z" fill="#fff" opacity=".38"/><circle cx="22.6" cy="22.1" r=".8" fill="#5fd44a"/></g><g transform="translate(32.1,27.4)"><ellipse cx="14" cy="26.8" rx="9" ry="3.5" fill="#9da3a6"/><ellipse cx="14" cy="26" rx="8" ry="2.6" fill="#c9cdcf"/><path d="M11 19h6l1.5 6.5h-9z" fill="#aeb4b7"/><path d="M2 0l25.6 2.7-3.1 20.6L0 18.6z" fill="#5e6b74"/><path d="M3.6 1.7l22.2 2.4-2.6 17.2L1.9 17.3z" fill="url(#nb)"/><path d="M3.6 1.7l22.2 2.4-.5 3.3C17 5.5 7 8 2.6 13.5z" fill="#fff" opacity=".38"/><circle cx="22.6" cy="22.1" r=".8" fill="#5fd44a"/></g></svg></div><div id="tm">0:16:41</div><div class="bt" style="left:1753px;top:2073px;width:71px"><svg width="69" height="62"><circle cx="34" cy="31" r="26.8" fill="#fff" stroke="#111" stroke-width="1.5"/><path d="M34.0 13.5L34.0 6.0M43.8 14.1L46.5 9.3M50.9 21.2L55.7 18.5M51.5 31.0L59.0 31.0M50.9 40.8L55.7 43.5M43.8 47.9L46.5 52.7M34.0 48.5L34.0 56.0M24.2 47.9L21.5 52.7M17.1 40.8L12.3 43.5M16.5 31.0L9.0 31.0M17.1 21.2L12.3 18.5M24.2 14.1L21.5 9.3" stroke="#111" stroke-width="1.7"/><path d="M34 31L37.6 9.5" stroke="#111" stroke-width="2"/><path d="M34 31h13.5" stroke="#111" stroke-width="3"/><circle cx="34" cy="31" r="2.2" fill="#111"/></svg></div><div class="bt" style="left:1828px;top:2073px;width:71px"><svg width="69" height="62"><ellipse cx="30" cy="52" rx="24" ry="2.2" fill="#000" opacity=".13"/><path d="M14 5h30l10 10v36H14z" fill="#e6e6e6" stroke="#bcbcbc"/><path d="M44 5v10h10z" fill="#f8f8f8" stroke="#bcbcbc"/><path d="M21 13h18M21 18h27M21 23h27M21 28h27M21 33h27M21 38h27M21 43h27M27 13v32M36 13v32M43 18v27" stroke="#cfcfcf" stroke-width=".9" fill="none"/><path d="M45.5 34h8v7h7.5v8h-7.5v7.5h-8V49H39v-8h6.5z" fill="#a3cc45" stroke="#86b02c" stroke-width="1"/><path d="M47 35.5h5v7h7.5v5H52v7.5h-5V47.500h-6.500v-5H47z" fill="none" stroke="#c4e07e" stroke-width=".8"/></svg></div><div class="bt" style="left:1906px;top:2073px;width:71px"><svg width="69" height="62"><defs><linearGradient id="gg" x1="0" y1="0" x2="1" y2="1"><stop offset="0" stop-color="#f6f6f6"/><stop offset=".5" stop-color="#cfcfcf"/><stop offset="1" stop-color="#9c9c9c"/></linearGradient></defs><path d="M30.2 4.3L38.8 4.3L39.8 11.7L44.4 13.6L50.3 9.1L56.4 15.2L51.9 21.1L53.8 25.7L61.2 26.7L61.2 35.3L53.8 36.3L51.9 40.9L56.4 46.8L50.3 52.9L44.4 48.4L39.8 50.3L38.8 57.7L30.2 57.7L29.2 50.3L24.6 48.4L18.7 52.9L12.6 46.8L17.1 40.9L15.2 36.3L7.8 35.3L7.8 26.7L15.2 25.7L17.1 21.1L12.6 15.2L18.7 9.1L24.6 13.6L29.2 11.7Z" fill="url(#gg)" stroke="#9a9a9a" stroke-width="1"/><circle cx="34.5" cy="31" r="14" fill="none" stroke="#a2a2a2" stroke-width="4"/><circle cx="34.5" cy="31" r="16.3" fill="none" stroke="#ececec" stroke-width="1"/><circle cx="34.5" cy="31" r="11" fill="#fdfdfd" stroke="#9d9d9d" stroke-width="1.5"/></svg></div><div class="bt" style="left:1983px;top:2073px;width:71px"><svg width="69" height="62"><defs><linearGradient id="xg" x1="0" y1="0" x2="1" y2="1"><stop offset="0" stop-color="#1d7fc0"/><stop offset="1" stop-color="#5cb8f0"/></linearGradient></defs><path d="M24.200 11l10 10 10-10 10 10-10 10 10 10-10 10-10-10-10 10-10-10 10-10-10-10z" fill="url(#xg)"/></svg></div></div></body></html>
